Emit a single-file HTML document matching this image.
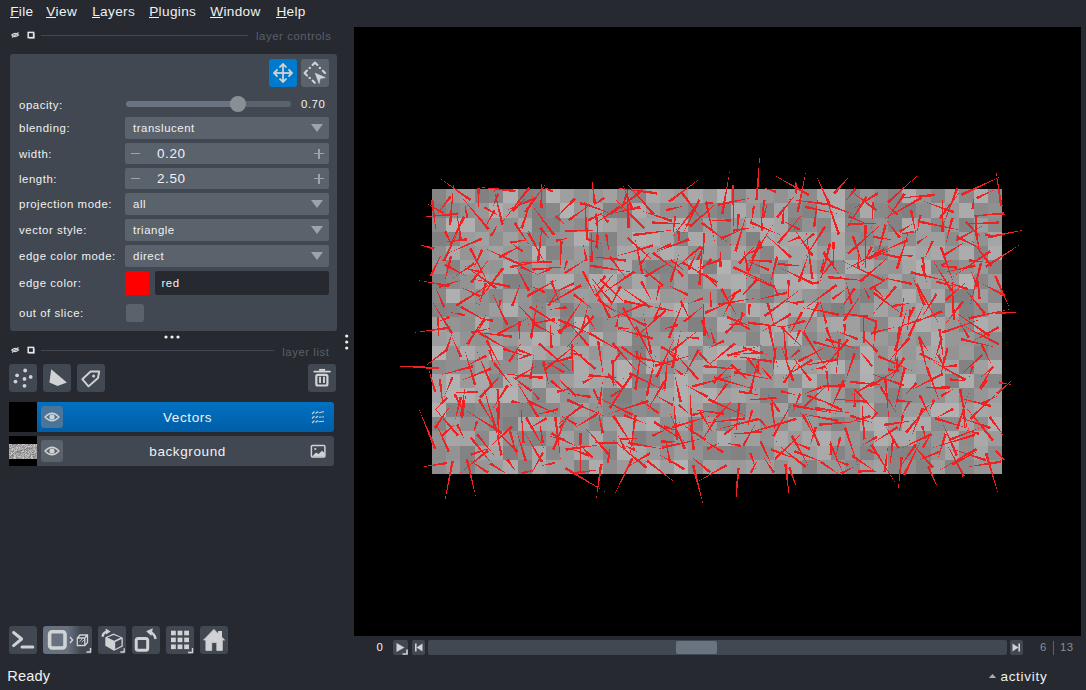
<!DOCTYPE html>
<html><head><meta charset="utf-8">
<style>
*{margin:0;padding:0;box-sizing:border-box}
html,body{width:1086px;height:690px;overflow:hidden;background:#262930}
body{position:relative;font-family:"Liberation Sans",sans-serif;color:#f0f1f2}
.a{position:absolute}
.t{position:absolute;white-space:nowrap;line-height:1}
.lbl{font-size:11.4px;letter-spacing:0.55px}
.menu{font-size:13.6px;letter-spacing:0.35px;top:4.5px}
.menu u{text-decoration:none;position:relative}
.menu u:after{content:"";position:absolute;left:0;right:0;height:1px;background:#f0f1f2;top:13px}
.btn{position:absolute;border-radius:3px}
.combo{position:absolute;left:125px;width:204px;height:22px;background:#5a626c;border-radius:2px}
.tri{position:absolute;right:6.5px;top:7px;width:0;height:0;border-left:6.8px solid transparent;border-right:6.8px solid transparent;border-top:8.2px solid #9da3a8}
.ctext{font-size:11.4px;letter-spacing:0.55px;left:8px}
</style></head><body>
<!-- menu -->
<div class="t menu" style="left:10.2px"><u>F</u>ile</div>
<div class="t menu" style="left:46.2px"><u>V</u>iew</div>
<div class="t menu" style="left:92.2px"><u>L</u>ayers</div>
<div class="t menu" style="left:149.2px"><u>P</u>lugins</div>
<div class="t menu" style="left:210.2px"><u>W</u>indow</div>
<div class="t menu" style="left:276.4px"><u>H</u>elp</div>

<!-- layer controls title -->
<svg class="a" style="left:10px;top:30px" width="26" height="10" viewBox="0 0 26 10">
 <g fill="none" stroke="#d1d2d4" stroke-width="1.2"><path d="M1.8 5 Q5 2 8.5 5 Q5 8 1.8 5Z"/><path d="M2 7.5 L8.5 2.5"/></g>
 <rect x="19.2" y="3.3" width="5.6" height="5.4" fill="#9a9ea3"/><rect x="18.2" y="2.4" width="5.4" height="5.2" fill="#262930" stroke="#e6e7e8" stroke-width="1.5"/>
</svg>
<div class="a" style="left:41px;top:35px;width:207px;height:1px;background:#414851"></div>
<div class="t" style="left:256px;top:30.7px;font-size:11.4px;letter-spacing:0.55px;color:#59606a">layer controls</div>

<!-- panel -->
<div class="a" style="left:10px;top:54px;width:327px;height:277px;background:#414851;border-radius:3px"></div>
<div class="btn" style="left:269px;top:59px;width:28px;height:28px;background:#007acc"></div>
<svg class="a" style="left:269px;top:59px" width="28" height="28" viewBox="0 0 28 28"><g fill="#d1d2d4"><rect x="13.1" y="6" width="1.8" height="16"/><rect x="6" y="13.1" width="16" height="1.8"/><path d="M14 3.8 L18.2 7.9 L16.9 9.1 L14 6.6 L11.1 9.1 L9.8 7.9Z"/><path d="M14 24.2 L18.2 20.1 L16.9 18.9 L14 21.4 L11.1 18.9 L9.8 20.1Z"/><path d="M3.8 14 L7.9 18.2 L9.1 16.9 L6.6 14 L9.1 11.1 L7.9 9.8Z"/><path d="M24.2 14 L20.1 18.2 L18.9 16.9 L21.4 14 L18.9 11.1 L20.1 9.8Z"/></g></svg>
<div class="btn" style="left:301px;top:59px;width:28px;height:28px;background:#5a626c"></div>
<svg class="a" style="left:301px;top:59px" width="28" height="28" viewBox="0 0 28 28"><g fill="none" stroke="#d1d2d4" stroke-width="2.1" stroke-linecap="round" stroke-linejoin="round"><path d="M11.6 6 L14 3.5 L16.4 6"/><path d="M6 11.6 L3.6 14 L6 16.4"/><path d="M21.8 11.8 L24 14"/><path d="M11.6 21.6 L13.8 23.8"/></g><g fill="#d1d2d4"><circle cx="8.8" cy="8.9" r="1.2"/><circle cx="18.9" cy="8.9" r="1.2"/><circle cx="8.7" cy="18.9" r="1.2"/></g><path d="M14.2 14.2 L24.4 18.6 L19.2 19.6 L18.1 24.6 Z" fill="#d1d2d4" stroke="#d1d2d4" stroke-width="0.6" stroke-linejoin="round"/></svg>

<!-- rows -->
<div class="t lbl" style="left:19px;top:99.7px">opacity:</div>
<div class="a" style="left:126px;top:101px;width:165px;height:6px;background:linear-gradient(90deg,#6a7380 0,#6a7380 112px,#5a626c 112px);border-radius:3px"></div>
<div class="a" style="left:230px;top:95.9px;width:15.8px;height:15.8px;background:#899095;border-radius:50%"></div>
<div class="t lbl" style="left:301px;top:98.5px">0.70</div>

<div class="t lbl" style="left:19px;top:123.4px">blending:</div>
<div class="combo" style="top:117px"><div class="t ctext" style="top:5.8px">translucent</div><div class="tri"></div></div>

<div class="t lbl" style="left:19px;top:148.7px">width:</div>
<div class="combo" style="top:143px;height:21px"><div class="a" style="left:6px;top:10px;width:9px;height:1.4px;background:#9da3a8"></div><div class="t" style="left:32px;top:3.5px;font-size:13.5px;letter-spacing:0.6px">0.20</div><div class="a" style="left:189px;top:10px;width:10px;height:1.4px;background:#9da3a8"></div><div class="a" style="left:193.3px;top:5.5px;width:1.4px;height:10px;background:#9da3a8"></div></div>

<div class="t lbl" style="left:19px;top:174.4px">length:</div>
<div class="combo" style="top:168px;height:21px"><div class="a" style="left:6px;top:10px;width:9px;height:1.4px;background:#9da3a8"></div><div class="t" style="left:32px;top:3.5px;font-size:13.5px;letter-spacing:0.6px">2.50</div><div class="a" style="left:189px;top:10px;width:10px;height:1.4px;background:#9da3a8"></div><div class="a" style="left:193.3px;top:5.5px;width:1.4px;height:10px;background:#9da3a8"></div></div>

<div class="t lbl" style="left:19px;top:199px">projection mode:</div>
<div class="combo" style="top:193px"><div class="t ctext" style="top:5.8px">all</div><div class="tri"></div></div>

<div class="t lbl" style="left:19px;top:225px">vector style:</div>
<div class="combo" style="top:219px"><div class="t ctext" style="top:5.8px">triangle</div><div class="tri"></div></div>

<div class="t lbl" style="left:19px;top:250.6px">edge color mode:</div>
<div class="combo" style="top:245px"><div class="t ctext" style="top:5.8px">direct</div><div class="tri"></div></div>

<div class="t lbl" style="left:19px;top:277.6px">edge color:</div>
<div class="a" style="left:125px;top:271px;width:24px;height:24px;background:#ff0000"></div>
<div class="a" style="left:155px;top:271px;width:174px;height:24px;background:#262930;border-radius:2px"></div>
<div class="t lbl" style="left:161.5px;top:277.6px">red</div>

<div class="t lbl" style="left:19px;top:308px">out of slice:</div>
<div class="a" style="left:126px;top:304px;width:18px;height:18px;background:#5a626c;border-radius:3px"></div>

<!-- handle dots -->
<svg class="a" style="left:160px;top:332px" width="24" height="10"><g fill="#f0f1f2"><circle cx="6" cy="5" r="1.6"/><circle cx="12" cy="5" r="1.6"/><circle cx="18" cy="5" r="1.6"/></g></svg>
<svg class="a" style="left:340px;top:330px" width="14" height="24"><g fill="#f0f1f2"><circle cx="6.7" cy="6" r="1.6"/><circle cx="6.7" cy="12" r="1.6"/><circle cx="6.7" cy="18" r="1.6"/></g></svg>

<!-- layer list title -->
<svg class="a" style="left:10px;top:345px" width="26" height="10" viewBox="0 0 26 10">
 <g fill="none" stroke="#d1d2d4" stroke-width="1.2"><path d="M1.8 5 Q5 2 8.5 5 Q5 8 1.8 5Z"/><path d="M2 7.5 L8.5 2.5"/></g>
 <rect x="19.2" y="3.3" width="5.6" height="5.4" fill="#9a9ea3"/><rect x="18.2" y="2.4" width="5.4" height="5.2" fill="#262930" stroke="#e6e7e8" stroke-width="1.5"/>
</svg>
<div class="a" style="left:41px;top:350px;width:233px;height:1px;background:#414851"></div>
<div class="t" style="left:282.2px;top:346.5px;font-size:11.4px;letter-spacing:0.55px;color:#59606a">layer list</div>

<!-- layer buttons -->
<div class="btn" style="left:9px;top:364px;width:28px;height:28px;background:#414851"></div>
<svg class="a" style="left:9px;top:364px" width="28" height="28" viewBox="0 0 28 28"><g fill="#d1d2d4"><circle cx="16.2" cy="6.5" r="1.9"/><circle cx="8.1" cy="11.3" r="1.9"/><circle cx="21.7" cy="12.9" r="1.9"/><circle cx="15.5" cy="14.9" r="1.9"/><circle cx="6.5" cy="17.6" r="1.9"/><circle cx="15.5" cy="21.8" r="1.9"/></g></svg>
<div class="btn" style="left:43px;top:364px;width:28px;height:28px;background:#414851"></div>
<svg class="a" style="left:43px;top:364px" width="28" height="28" viewBox="0 0 28 28"><path d="M8.2 5.2 L23.9 18.5 L14.5 22.1 L6.4 18.5 Z" fill="#d1d2d4"/></svg>
<div class="btn" style="left:77px;top:364px;width:28px;height:28px;background:#414851"></div>
<svg class="a" style="left:77px;top:364px" width="28" height="28" viewBox="0 0 28 28"><path d="M5.3 15.2 L13.6 7.5 H22.2 L21 14 L11.5 22.4 Z" fill="none" stroke="#d1d2d4" stroke-width="1.9" stroke-linejoin="round"/><circle cx="16.6" cy="11.9" r="1.5" fill="#d1d2d4"/></svg>
<div class="btn" style="left:308px;top:364px;width:28px;height:28px;background:#414851"></div>
<svg class="a" style="left:308px;top:364px" width="28" height="28" viewBox="0 0 28 28"><g fill="#d1d2d4"><rect x="5.4" y="6.7" width="17.5" height="1.9" rx="0.8"/><rect x="11.1" y="4.9" width="6" height="2"/><rect x="11.1" y="12.7" width="1.9" height="6.3"/><rect x="15" y="12.7" width="1.9" height="6.3"/></g><rect x="8.3" y="10.9" width="11.1" height="10.6" rx="1.5" fill="none" stroke="#d1d2d4" stroke-width="2.2"/></svg>

<!-- layer rows -->
<div class="a" style="left:9px;top:402px;width:28px;height:30px;background:#000"></div>
<div class="a" style="left:37px;top:402px;width:297px;height:30px;background:linear-gradient(#0071c2,#005ea6);border-radius:0 3px 3px 0"></div>
<div class="btn" style="left:41px;top:406px;width:22px;height:22px;background:#4a7498"></div>
<svg class="a" style="left:41px;top:406px" width="22" height="22" viewBox="0 0 22 22"><path d="M4 11 Q11 3.5 18 11 Q11 18.5 4 11Z" fill="none" stroke="#d1d2d4" stroke-width="1.3"/><circle cx="11" cy="11" r="2.6" fill="#d1d2d4"/></svg>
<div class="t" style="left:163px;top:411px;font-size:13.5px;letter-spacing:0.6px">Vectors</div>
<svg class="a" style="left:308px;top:407px" width="20" height="20" viewBox="0 0 20 20"><g fill="none" stroke="#d1d2d4" stroke-width="1.1"><path d="M4 7 L6.5 4.5 M7.5 6.5 L10 4.5 M10.5 5.8 L12.5 5.5 L14 5 L16 4.8 M4 11.5 L6.5 9 M7.5 11 L10 9 M11 10.2 L13 10 M13.5 10 L16 10 M4 16 L6.5 13.5 M7.5 15.5 L10 13.5 M10.5 14.8 L13 14.5 L16 14.3"/></g></svg>

<div class="a" style="left:9px;top:436px;width:28px;height:30px;background:#000"></div>
<svg class="a" style="left:9px;top:444px" width="28" height="15" shape-rendering="crispEdges"><rect x="0" y="0" width="1" height="1" fill="#bdbdbd"/><rect x="1" y="0" width="1" height="1" fill="#bdbdbd"/><rect x="2" y="0" width="1" height="1" fill="#a6a6a6"/><rect x="3" y="0" width="1" height="1" fill="#939393"/><rect x="4" y="0" width="1" height="1" fill="#818181"/><rect x="5" y="0" width="1" height="1" fill="#9b9b9b"/><rect x="6" y="0" width="1" height="1" fill="#9d9d9d"/><rect x="7" y="0" width="1" height="1" fill="#808080"/><rect x="8" y="0" width="1" height="1" fill="#808080"/><rect x="9" y="0" width="1" height="1" fill="#cccccc"/><rect x="10" y="0" width="1" height="1" fill="#b1b1b1"/><rect x="11" y="0" width="1" height="1" fill="#8f8f8f"/><rect x="12" y="0" width="1" height="1" fill="#9f9f9f"/><rect x="13" y="0" width="1" height="1" fill="#cacaca"/><rect x="14" y="0" width="1" height="1" fill="#c4c4c4"/><rect x="15" y="0" width="1" height="1" fill="#c0c0c0"/><rect x="16" y="0" width="1" height="1" fill="#9c9c9c"/><rect x="17" y="0" width="1" height="1" fill="#a4a4a4"/><rect x="18" y="0" width="1" height="1" fill="#b3b3b3"/><rect x="19" y="0" width="1" height="1" fill="#818181"/><rect x="20" y="0" width="1" height="1" fill="#a9a9a9"/><rect x="21" y="0" width="1" height="1" fill="#929292"/><rect x="22" y="0" width="1" height="1" fill="#c3c3c3"/><rect x="23" y="0" width="1" height="1" fill="#828282"/><rect x="24" y="0" width="1" height="1" fill="#b3b3b3"/><rect x="25" y="0" width="1" height="1" fill="#c2c2c2"/><rect x="26" y="0" width="1" height="1" fill="#8f8f8f"/><rect x="27" y="0" width="1" height="1" fill="#c4c4c4"/><rect x="0" y="1" width="1" height="1" fill="#c2c2c2"/><rect x="1" y="1" width="1" height="1" fill="#7e7e7e"/><rect x="2" y="1" width="1" height="1" fill="#b5b5b5"/><rect x="3" y="1" width="1" height="1" fill="#7d7d7d"/><rect x="4" y="1" width="1" height="1" fill="#a5a5a5"/><rect x="5" y="1" width="1" height="1" fill="#9f9f9f"/><rect x="6" y="1" width="1" height="1" fill="#8d8d8d"/><rect x="7" y="1" width="1" height="1" fill="#969696"/><rect x="8" y="1" width="1" height="1" fill="#bdbdbd"/><rect x="9" y="1" width="1" height="1" fill="#969696"/><rect x="10" y="1" width="1" height="1" fill="#888888"/><rect x="11" y="1" width="1" height="1" fill="#b4b4b4"/><rect x="12" y="1" width="1" height="1" fill="#a0a0a0"/><rect x="13" y="1" width="1" height="1" fill="#bcbcbc"/><rect x="14" y="1" width="1" height="1" fill="#8f8f8f"/><rect x="15" y="1" width="1" height="1" fill="#969696"/><rect x="16" y="1" width="1" height="1" fill="#bcbcbc"/><rect x="17" y="1" width="1" height="1" fill="#a5a5a5"/><rect x="18" y="1" width="1" height="1" fill="#a5a5a5"/><rect x="19" y="1" width="1" height="1" fill="#8f8f8f"/><rect x="20" y="1" width="1" height="1" fill="#7e7e7e"/><rect x="21" y="1" width="1" height="1" fill="#c7c7c7"/><rect x="22" y="1" width="1" height="1" fill="#838383"/><rect x="23" y="1" width="1" height="1" fill="#c0c0c0"/><rect x="24" y="1" width="1" height="1" fill="#9a9a9a"/><rect x="25" y="1" width="1" height="1" fill="#c9c9c9"/><rect x="26" y="1" width="1" height="1" fill="#9c9c9c"/><rect x="27" y="1" width="1" height="1" fill="#c7c7c7"/><rect x="0" y="2" width="1" height="1" fill="#a9a9a9"/><rect x="1" y="2" width="1" height="1" fill="#909090"/><rect x="2" y="2" width="1" height="1" fill="#b8b8b8"/><rect x="3" y="2" width="1" height="1" fill="#b2b2b2"/><rect x="4" y="2" width="1" height="1" fill="#b3b3b3"/><rect x="5" y="2" width="1" height="1" fill="#a2a2a2"/><rect x="6" y="2" width="1" height="1" fill="#8e8e8e"/><rect x="7" y="2" width="1" height="1" fill="#b0b0b0"/><rect x="8" y="2" width="1" height="1" fill="#858585"/><rect x="9" y="2" width="1" height="1" fill="#b4b4b4"/><rect x="10" y="2" width="1" height="1" fill="#afafaf"/><rect x="11" y="2" width="1" height="1" fill="#9b9b9b"/><rect x="12" y="2" width="1" height="1" fill="#bcbcbc"/><rect x="13" y="2" width="1" height="1" fill="#8c8c8c"/><rect x="14" y="2" width="1" height="1" fill="#9c9c9c"/><rect x="15" y="2" width="1" height="1" fill="#bcbcbc"/><rect x="16" y="2" width="1" height="1" fill="#9b9b9b"/><rect x="17" y="2" width="1" height="1" fill="#b6b6b6"/><rect x="18" y="2" width="1" height="1" fill="#aeaeae"/><rect x="19" y="2" width="1" height="1" fill="#c8c8c8"/><rect x="20" y="2" width="1" height="1" fill="#cccccc"/><rect x="21" y="2" width="1" height="1" fill="#b6b6b6"/><rect x="22" y="2" width="1" height="1" fill="#bdbdbd"/><rect x="23" y="2" width="1" height="1" fill="#898989"/><rect x="24" y="2" width="1" height="1" fill="#b6b6b6"/><rect x="25" y="2" width="1" height="1" fill="#c0c0c0"/><rect x="26" y="2" width="1" height="1" fill="#9d9d9d"/><rect x="27" y="2" width="1" height="1" fill="#a9a9a9"/><rect x="0" y="3" width="1" height="1" fill="#a3a3a3"/><rect x="1" y="3" width="1" height="1" fill="#c9c9c9"/><rect x="2" y="3" width="1" height="1" fill="#969696"/><rect x="3" y="3" width="1" height="1" fill="#9d9d9d"/><rect x="4" y="3" width="1" height="1" fill="#7d7d7d"/><rect x="5" y="3" width="1" height="1" fill="#9e9e9e"/><rect x="6" y="3" width="1" height="1" fill="#afafaf"/><rect x="7" y="3" width="1" height="1" fill="#c7c7c7"/><rect x="8" y="3" width="1" height="1" fill="#c6c6c6"/><rect x="9" y="3" width="1" height="1" fill="#979797"/><rect x="10" y="3" width="1" height="1" fill="#cccccc"/><rect x="11" y="3" width="1" height="1" fill="#8c8c8c"/><rect x="12" y="3" width="1" height="1" fill="#bebebe"/><rect x="13" y="3" width="1" height="1" fill="#898989"/><rect x="14" y="3" width="1" height="1" fill="#9d9d9d"/><rect x="15" y="3" width="1" height="1" fill="#828282"/><rect x="16" y="3" width="1" height="1" fill="#c1c1c1"/><rect x="17" y="3" width="1" height="1" fill="#bfbfbf"/><rect x="18" y="3" width="1" height="1" fill="#888888"/><rect x="19" y="3" width="1" height="1" fill="#a7a7a7"/><rect x="20" y="3" width="1" height="1" fill="#919191"/><rect x="21" y="3" width="1" height="1" fill="#a4a4a4"/><rect x="22" y="3" width="1" height="1" fill="#a9a9a9"/><rect x="23" y="3" width="1" height="1" fill="#858585"/><rect x="24" y="3" width="1" height="1" fill="#c2c2c2"/><rect x="25" y="3" width="1" height="1" fill="#939393"/><rect x="26" y="3" width="1" height="1" fill="#a0a0a0"/><rect x="27" y="3" width="1" height="1" fill="#818181"/><rect x="0" y="4" width="1" height="1" fill="#7d7d7d"/><rect x="1" y="4" width="1" height="1" fill="#8c8c8c"/><rect x="2" y="4" width="1" height="1" fill="#989898"/><rect x="3" y="4" width="1" height="1" fill="#c7c7c7"/><rect x="4" y="4" width="1" height="1" fill="#c4c4c4"/><rect x="5" y="4" width="1" height="1" fill="#a3a3a3"/><rect x="6" y="4" width="1" height="1" fill="#a1a1a1"/><rect x="7" y="4" width="1" height="1" fill="#b2b2b2"/><rect x="8" y="4" width="1" height="1" fill="#c1c1c1"/><rect x="9" y="4" width="1" height="1" fill="#979797"/><rect x="10" y="4" width="1" height="1" fill="#bcbcbc"/><rect x="11" y="4" width="1" height="1" fill="#9c9c9c"/><rect x="12" y="4" width="1" height="1" fill="#acacac"/><rect x="13" y="4" width="1" height="1" fill="#b7b7b7"/><rect x="14" y="4" width="1" height="1" fill="#a5a5a5"/><rect x="15" y="4" width="1" height="1" fill="#b4b4b4"/><rect x="16" y="4" width="1" height="1" fill="#b4b4b4"/><rect x="17" y="4" width="1" height="1" fill="#7d7d7d"/><rect x="18" y="4" width="1" height="1" fill="#808080"/><rect x="19" y="4" width="1" height="1" fill="#888888"/><rect x="20" y="4" width="1" height="1" fill="#8e8e8e"/><rect x="21" y="4" width="1" height="1" fill="#8d8d8d"/><rect x="22" y="4" width="1" height="1" fill="#808080"/><rect x="23" y="4" width="1" height="1" fill="#8e8e8e"/><rect x="24" y="4" width="1" height="1" fill="#adadad"/><rect x="25" y="4" width="1" height="1" fill="#c3c3c3"/><rect x="26" y="4" width="1" height="1" fill="#989898"/><rect x="27" y="4" width="1" height="1" fill="#9a9a9a"/><rect x="0" y="5" width="1" height="1" fill="#9e9e9e"/><rect x="1" y="5" width="1" height="1" fill="#b3b3b3"/><rect x="2" y="5" width="1" height="1" fill="#bbbbbb"/><rect x="3" y="5" width="1" height="1" fill="#c8c8c8"/><rect x="4" y="5" width="1" height="1" fill="#9b9b9b"/><rect x="5" y="5" width="1" height="1" fill="#b5b5b5"/><rect x="6" y="5" width="1" height="1" fill="#989898"/><rect x="7" y="5" width="1" height="1" fill="#bebebe"/><rect x="8" y="5" width="1" height="1" fill="#8f8f8f"/><rect x="9" y="5" width="1" height="1" fill="#c2c2c2"/><rect x="10" y="5" width="1" height="1" fill="#a5a5a5"/><rect x="11" y="5" width="1" height="1" fill="#b7b7b7"/><rect x="12" y="5" width="1" height="1" fill="#a7a7a7"/><rect x="13" y="5" width="1" height="1" fill="#969696"/><rect x="14" y="5" width="1" height="1" fill="#a4a4a4"/><rect x="15" y="5" width="1" height="1" fill="#818181"/><rect x="16" y="5" width="1" height="1" fill="#808080"/><rect x="17" y="5" width="1" height="1" fill="#a7a7a7"/><rect x="18" y="5" width="1" height="1" fill="#a3a3a3"/><rect x="19" y="5" width="1" height="1" fill="#bfbfbf"/><rect x="20" y="5" width="1" height="1" fill="#7e7e7e"/><rect x="21" y="5" width="1" height="1" fill="#a9a9a9"/><rect x="22" y="5" width="1" height="1" fill="#a4a4a4"/><rect x="23" y="5" width="1" height="1" fill="#acacac"/><rect x="24" y="5" width="1" height="1" fill="#b7b7b7"/><rect x="25" y="5" width="1" height="1" fill="#a6a6a6"/><rect x="26" y="5" width="1" height="1" fill="#aaaaaa"/><rect x="27" y="5" width="1" height="1" fill="#a4a4a4"/><rect x="0" y="6" width="1" height="1" fill="#aeaeae"/><rect x="1" y="6" width="1" height="1" fill="#909090"/><rect x="2" y="6" width="1" height="1" fill="#a9a9a9"/><rect x="3" y="6" width="1" height="1" fill="#b2b2b2"/><rect x="4" y="6" width="1" height="1" fill="#8c8c8c"/><rect x="5" y="6" width="1" height="1" fill="#cccccc"/><rect x="6" y="6" width="1" height="1" fill="#b8b8b8"/><rect x="7" y="6" width="1" height="1" fill="#c9c9c9"/><rect x="8" y="6" width="1" height="1" fill="#949494"/><rect x="9" y="6" width="1" height="1" fill="#a0a0a0"/><rect x="10" y="6" width="1" height="1" fill="#919191"/><rect x="11" y="6" width="1" height="1" fill="#808080"/><rect x="12" y="6" width="1" height="1" fill="#7e7e7e"/><rect x="13" y="6" width="1" height="1" fill="#909090"/><rect x="14" y="6" width="1" height="1" fill="#c1c1c1"/><rect x="15" y="6" width="1" height="1" fill="#8a8a8a"/><rect x="16" y="6" width="1" height="1" fill="#b4b4b4"/><rect x="17" y="6" width="1" height="1" fill="#909090"/><rect x="18" y="6" width="1" height="1" fill="#828282"/><rect x="19" y="6" width="1" height="1" fill="#8c8c8c"/><rect x="20" y="6" width="1" height="1" fill="#b3b3b3"/><rect x="21" y="6" width="1" height="1" fill="#a5a5a5"/><rect x="22" y="6" width="1" height="1" fill="#a8a8a8"/><rect x="23" y="6" width="1" height="1" fill="#a1a1a1"/><rect x="24" y="6" width="1" height="1" fill="#929292"/><rect x="25" y="6" width="1" height="1" fill="#a4a4a4"/><rect x="26" y="6" width="1" height="1" fill="#c6c6c6"/><rect x="27" y="6" width="1" height="1" fill="#8d8d8d"/><rect x="0" y="7" width="1" height="1" fill="#b7b7b7"/><rect x="1" y="7" width="1" height="1" fill="#919191"/><rect x="2" y="7" width="1" height="1" fill="#8c8c8c"/><rect x="3" y="7" width="1" height="1" fill="#969696"/><rect x="4" y="7" width="1" height="1" fill="#848484"/><rect x="5" y="7" width="1" height="1" fill="#c7c7c7"/><rect x="6" y="7" width="1" height="1" fill="#9a9a9a"/><rect x="7" y="7" width="1" height="1" fill="#8b8b8b"/><rect x="8" y="7" width="1" height="1" fill="#7d7d7d"/><rect x="9" y="7" width="1" height="1" fill="#818181"/><rect x="10" y="7" width="1" height="1" fill="#8e8e8e"/><rect x="11" y="7" width="1" height="1" fill="#9e9e9e"/><rect x="12" y="7" width="1" height="1" fill="#adadad"/><rect x="13" y="7" width="1" height="1" fill="#cbcbcb"/><rect x="14" y="7" width="1" height="1" fill="#c4c4c4"/><rect x="15" y="7" width="1" height="1" fill="#909090"/><rect x="16" y="7" width="1" height="1" fill="#adadad"/><rect x="17" y="7" width="1" height="1" fill="#c6c6c6"/><rect x="18" y="7" width="1" height="1" fill="#858585"/><rect x="19" y="7" width="1" height="1" fill="#c1c1c1"/><rect x="20" y="7" width="1" height="1" fill="#9c9c9c"/><rect x="21" y="7" width="1" height="1" fill="#bbbbbb"/><rect x="22" y="7" width="1" height="1" fill="#969696"/><rect x="23" y="7" width="1" height="1" fill="#afafaf"/><rect x="24" y="7" width="1" height="1" fill="#a5a5a5"/><rect x="25" y="7" width="1" height="1" fill="#858585"/><rect x="26" y="7" width="1" height="1" fill="#b9b9b9"/><rect x="27" y="7" width="1" height="1" fill="#bebebe"/><rect x="0" y="8" width="1" height="1" fill="#a3a3a3"/><rect x="1" y="8" width="1" height="1" fill="#9c9c9c"/><rect x="2" y="8" width="1" height="1" fill="#c8c8c8"/><rect x="3" y="8" width="1" height="1" fill="#9a9a9a"/><rect x="4" y="8" width="1" height="1" fill="#c3c3c3"/><rect x="5" y="8" width="1" height="1" fill="#9e9e9e"/><rect x="6" y="8" width="1" height="1" fill="#9a9a9a"/><rect x="7" y="8" width="1" height="1" fill="#999999"/><rect x="8" y="8" width="1" height="1" fill="#818181"/><rect x="9" y="8" width="1" height="1" fill="#939393"/><rect x="10" y="8" width="1" height="1" fill="#8f8f8f"/><rect x="11" y="8" width="1" height="1" fill="#818181"/><rect x="12" y="8" width="1" height="1" fill="#a8a8a8"/><rect x="13" y="8" width="1" height="1" fill="#a0a0a0"/><rect x="14" y="8" width="1" height="1" fill="#7f7f7f"/><rect x="15" y="8" width="1" height="1" fill="#898989"/><rect x="16" y="8" width="1" height="1" fill="#c6c6c6"/><rect x="17" y="8" width="1" height="1" fill="#878787"/><rect x="18" y="8" width="1" height="1" fill="#9a9a9a"/><rect x="19" y="8" width="1" height="1" fill="#c9c9c9"/><rect x="20" y="8" width="1" height="1" fill="#868686"/><rect x="21" y="8" width="1" height="1" fill="#9d9d9d"/><rect x="22" y="8" width="1" height="1" fill="#bdbdbd"/><rect x="23" y="8" width="1" height="1" fill="#7e7e7e"/><rect x="24" y="8" width="1" height="1" fill="#828282"/><rect x="25" y="8" width="1" height="1" fill="#c7c7c7"/><rect x="26" y="8" width="1" height="1" fill="#b3b3b3"/><rect x="27" y="8" width="1" height="1" fill="#919191"/><rect x="0" y="9" width="1" height="1" fill="#a3a3a3"/><rect x="1" y="9" width="1" height="1" fill="#909090"/><rect x="2" y="9" width="1" height="1" fill="#c4c4c4"/><rect x="3" y="9" width="1" height="1" fill="#c8c8c8"/><rect x="4" y="9" width="1" height="1" fill="#828282"/><rect x="5" y="9" width="1" height="1" fill="#a6a6a6"/><rect x="6" y="9" width="1" height="1" fill="#8b8b8b"/><rect x="7" y="9" width="1" height="1" fill="#9d9d9d"/><rect x="8" y="9" width="1" height="1" fill="#b8b8b8"/><rect x="9" y="9" width="1" height="1" fill="#b6b6b6"/><rect x="10" y="9" width="1" height="1" fill="#8c8c8c"/><rect x="11" y="9" width="1" height="1" fill="#979797"/><rect x="12" y="9" width="1" height="1" fill="#9f9f9f"/><rect x="13" y="9" width="1" height="1" fill="#9b9b9b"/><rect x="14" y="9" width="1" height="1" fill="#b3b3b3"/><rect x="15" y="9" width="1" height="1" fill="#bcbcbc"/><rect x="16" y="9" width="1" height="1" fill="#979797"/><rect x="17" y="9" width="1" height="1" fill="#a0a0a0"/><rect x="18" y="9" width="1" height="1" fill="#828282"/><rect x="19" y="9" width="1" height="1" fill="#9a9a9a"/><rect x="20" y="9" width="1" height="1" fill="#c8c8c8"/><rect x="21" y="9" width="1" height="1" fill="#a5a5a5"/><rect x="22" y="9" width="1" height="1" fill="#a9a9a9"/><rect x="23" y="9" width="1" height="1" fill="#adadad"/><rect x="24" y="9" width="1" height="1" fill="#aaaaaa"/><rect x="25" y="9" width="1" height="1" fill="#bdbdbd"/><rect x="26" y="9" width="1" height="1" fill="#919191"/><rect x="27" y="9" width="1" height="1" fill="#969696"/><rect x="0" y="10" width="1" height="1" fill="#c3c3c3"/><rect x="1" y="10" width="1" height="1" fill="#a4a4a4"/><rect x="2" y="10" width="1" height="1" fill="#c9c9c9"/><rect x="3" y="10" width="1" height="1" fill="#888888"/><rect x="4" y="10" width="1" height="1" fill="#bbbbbb"/><rect x="5" y="10" width="1" height="1" fill="#a2a2a2"/><rect x="6" y="10" width="1" height="1" fill="#a2a2a2"/><rect x="7" y="10" width="1" height="1" fill="#c3c3c3"/><rect x="8" y="10" width="1" height="1" fill="#878787"/><rect x="9" y="10" width="1" height="1" fill="#a6a6a6"/><rect x="10" y="10" width="1" height="1" fill="#909090"/><rect x="11" y="10" width="1" height="1" fill="#989898"/><rect x="12" y="10" width="1" height="1" fill="#bebebe"/><rect x="13" y="10" width="1" height="1" fill="#9c9c9c"/><rect x="14" y="10" width="1" height="1" fill="#bbbbbb"/><rect x="15" y="10" width="1" height="1" fill="#7e7e7e"/><rect x="16" y="10" width="1" height="1" fill="#cccccc"/><rect x="17" y="10" width="1" height="1" fill="#c9c9c9"/><rect x="18" y="10" width="1" height="1" fill="#b3b3b3"/><rect x="19" y="10" width="1" height="1" fill="#8c8c8c"/><rect x="20" y="10" width="1" height="1" fill="#b1b1b1"/><rect x="21" y="10" width="1" height="1" fill="#8c8c8c"/><rect x="22" y="10" width="1" height="1" fill="#9a9a9a"/><rect x="23" y="10" width="1" height="1" fill="#7f7f7f"/><rect x="24" y="10" width="1" height="1" fill="#828282"/><rect x="25" y="10" width="1" height="1" fill="#898989"/><rect x="26" y="10" width="1" height="1" fill="#8b8b8b"/><rect x="27" y="10" width="1" height="1" fill="#c0c0c0"/><rect x="0" y="11" width="1" height="1" fill="#909090"/><rect x="1" y="11" width="1" height="1" fill="#bfbfbf"/><rect x="2" y="11" width="1" height="1" fill="#7d7d7d"/><rect x="3" y="11" width="1" height="1" fill="#818181"/><rect x="4" y="11" width="1" height="1" fill="#818181"/><rect x="5" y="11" width="1" height="1" fill="#c7c7c7"/><rect x="6" y="11" width="1" height="1" fill="#bebebe"/><rect x="7" y="11" width="1" height="1" fill="#7e7e7e"/><rect x="8" y="11" width="1" height="1" fill="#c7c7c7"/><rect x="9" y="11" width="1" height="1" fill="#8f8f8f"/><rect x="10" y="11" width="1" height="1" fill="#929292"/><rect x="11" y="11" width="1" height="1" fill="#ababab"/><rect x="12" y="11" width="1" height="1" fill="#8d8d8d"/><rect x="13" y="11" width="1" height="1" fill="#cacaca"/><rect x="14" y="11" width="1" height="1" fill="#9a9a9a"/><rect x="15" y="11" width="1" height="1" fill="#aaaaaa"/><rect x="16" y="11" width="1" height="1" fill="#aaaaaa"/><rect x="17" y="11" width="1" height="1" fill="#939393"/><rect x="18" y="11" width="1" height="1" fill="#b7b7b7"/><rect x="19" y="11" width="1" height="1" fill="#cccccc"/><rect x="20" y="11" width="1" height="1" fill="#acacac"/><rect x="21" y="11" width="1" height="1" fill="#838383"/><rect x="22" y="11" width="1" height="1" fill="#bdbdbd"/><rect x="23" y="11" width="1" height="1" fill="#b2b2b2"/><rect x="24" y="11" width="1" height="1" fill="#a4a4a4"/><rect x="25" y="11" width="1" height="1" fill="#b1b1b1"/><rect x="26" y="11" width="1" height="1" fill="#919191"/><rect x="27" y="11" width="1" height="1" fill="#959595"/><rect x="0" y="12" width="1" height="1" fill="#a6a6a6"/><rect x="1" y="12" width="1" height="1" fill="#828282"/><rect x="2" y="12" width="1" height="1" fill="#acacac"/><rect x="3" y="12" width="1" height="1" fill="#8b8b8b"/><rect x="4" y="12" width="1" height="1" fill="#919191"/><rect x="5" y="12" width="1" height="1" fill="#c4c4c4"/><rect x="6" y="12" width="1" height="1" fill="#acacac"/><rect x="7" y="12" width="1" height="1" fill="#909090"/><rect x="8" y="12" width="1" height="1" fill="#b4b4b4"/><rect x="9" y="12" width="1" height="1" fill="#cccccc"/><rect x="10" y="12" width="1" height="1" fill="#c4c4c4"/><rect x="11" y="12" width="1" height="1" fill="#bcbcbc"/><rect x="12" y="12" width="1" height="1" fill="#979797"/><rect x="13" y="12" width="1" height="1" fill="#ababab"/><rect x="14" y="12" width="1" height="1" fill="#ababab"/><rect x="15" y="12" width="1" height="1" fill="#848484"/><rect x="16" y="12" width="1" height="1" fill="#b4b4b4"/><rect x="17" y="12" width="1" height="1" fill="#a6a6a6"/><rect x="18" y="12" width="1" height="1" fill="#a6a6a6"/><rect x="19" y="12" width="1" height="1" fill="#b7b7b7"/><rect x="20" y="12" width="1" height="1" fill="#838383"/><rect x="21" y="12" width="1" height="1" fill="#8e8e8e"/><rect x="22" y="12" width="1" height="1" fill="#cccccc"/><rect x="23" y="12" width="1" height="1" fill="#949494"/><rect x="24" y="12" width="1" height="1" fill="#919191"/><rect x="25" y="12" width="1" height="1" fill="#828282"/><rect x="26" y="12" width="1" height="1" fill="#959595"/><rect x="27" y="12" width="1" height="1" fill="#a9a9a9"/><rect x="0" y="13" width="1" height="1" fill="#808080"/><rect x="1" y="13" width="1" height="1" fill="#949494"/><rect x="2" y="13" width="1" height="1" fill="#919191"/><rect x="3" y="13" width="1" height="1" fill="#898989"/><rect x="4" y="13" width="1" height="1" fill="#bcbcbc"/><rect x="5" y="13" width="1" height="1" fill="#c9c9c9"/><rect x="6" y="13" width="1" height="1" fill="#c6c6c6"/><rect x="7" y="13" width="1" height="1" fill="#a0a0a0"/><rect x="8" y="13" width="1" height="1" fill="#828282"/><rect x="9" y="13" width="1" height="1" fill="#989898"/><rect x="10" y="13" width="1" height="1" fill="#a6a6a6"/><rect x="11" y="13" width="1" height="1" fill="#9b9b9b"/><rect x="12" y="13" width="1" height="1" fill="#b7b7b7"/><rect x="13" y="13" width="1" height="1" fill="#b8b8b8"/><rect x="14" y="13" width="1" height="1" fill="#c4c4c4"/><rect x="15" y="13" width="1" height="1" fill="#a2a2a2"/><rect x="16" y="13" width="1" height="1" fill="#909090"/><rect x="17" y="13" width="1" height="1" fill="#c5c5c5"/><rect x="18" y="13" width="1" height="1" fill="#c3c3c3"/><rect x="19" y="13" width="1" height="1" fill="#878787"/><rect x="20" y="13" width="1" height="1" fill="#8d8d8d"/><rect x="21" y="13" width="1" height="1" fill="#b1b1b1"/><rect x="22" y="13" width="1" height="1" fill="#bebebe"/><rect x="23" y="13" width="1" height="1" fill="#c9c9c9"/><rect x="24" y="13" width="1" height="1" fill="#7e7e7e"/><rect x="25" y="13" width="1" height="1" fill="#8c8c8c"/><rect x="26" y="13" width="1" height="1" fill="#9e9e9e"/><rect x="27" y="13" width="1" height="1" fill="#a9a9a9"/><rect x="0" y="14" width="1" height="1" fill="#bbbbbb"/><rect x="1" y="14" width="1" height="1" fill="#a9a9a9"/><rect x="2" y="14" width="1" height="1" fill="#a6a6a6"/><rect x="3" y="14" width="1" height="1" fill="#909090"/><rect x="4" y="14" width="1" height="1" fill="#b1b1b1"/><rect x="5" y="14" width="1" height="1" fill="#ababab"/><rect x="6" y="14" width="1" height="1" fill="#c8c8c8"/><rect x="7" y="14" width="1" height="1" fill="#8c8c8c"/><rect x="8" y="14" width="1" height="1" fill="#868686"/><rect x="9" y="14" width="1" height="1" fill="#999999"/><rect x="10" y="14" width="1" height="1" fill="#979797"/><rect x="11" y="14" width="1" height="1" fill="#a1a1a1"/><rect x="12" y="14" width="1" height="1" fill="#8a8a8a"/><rect x="13" y="14" width="1" height="1" fill="#b5b5b5"/><rect x="14" y="14" width="1" height="1" fill="#bebebe"/><rect x="15" y="14" width="1" height="1" fill="#7d7d7d"/><rect x="16" y="14" width="1" height="1" fill="#c5c5c5"/><rect x="17" y="14" width="1" height="1" fill="#848484"/><rect x="18" y="14" width="1" height="1" fill="#959595"/><rect x="19" y="14" width="1" height="1" fill="#a3a3a3"/><rect x="20" y="14" width="1" height="1" fill="#9e9e9e"/><rect x="21" y="14" width="1" height="1" fill="#8e8e8e"/><rect x="22" y="14" width="1" height="1" fill="#b7b7b7"/><rect x="23" y="14" width="1" height="1" fill="#c0c0c0"/><rect x="24" y="14" width="1" height="1" fill="#8f8f8f"/><rect x="25" y="14" width="1" height="1" fill="#8a8a8a"/><rect x="26" y="14" width="1" height="1" fill="#a6a6a6"/><rect x="27" y="14" width="1" height="1" fill="#888888"/></svg>
<div class="a" style="left:37px;top:436px;width:297px;height:30px;background:#414851;border-radius:0 3px 3px 0"></div>
<div class="btn" style="left:41px;top:440px;width:22px;height:22px;background:#5a626c"></div>
<svg class="a" style="left:41px;top:440px" width="22" height="22" viewBox="0 0 22 22"><path d="M4 11 Q11 3.5 18 11 Q11 18.5 4 11Z" fill="none" stroke="#d1d2d4" stroke-width="1.3"/><circle cx="11" cy="11" r="2.6" fill="#d1d2d4"/></svg>
<div class="t" style="left:149.3px;top:445px;font-size:13.5px;letter-spacing:0.6px">background</div>
<svg class="a" style="left:308px;top:441px" width="20" height="20" viewBox="0 0 20 20"><rect x="3.4" y="4.4" width="13.5" height="11.6" rx="1" fill="none" stroke="#d1d2d4" stroke-width="1.5"/><path d="M4 15.5 L8 11.5 L10.5 13 L14 9.8 L16.5 12 V15.5Z" fill="#d1d2d4"/><circle cx="7.3" cy="8" r="1.1" fill="#d1d2d4"/></svg>

<!-- bottom buttons -->
<div class="btn" style="left:9px;top:626px;width:28px;height:28px;background:#414851"></div>
<svg class="a" style="left:9px;top:626px" width="28" height="28" viewBox="0 0 28 28"><g fill="none" stroke="#d1d2d4" stroke-width="3" stroke-linecap="round" stroke-linejoin="round"><path d="M4.6 6.5 L12.6 13 L4.6 19.6"/><path d="M13 21 H23.8"/></g></svg>
<div class="btn" style="left:43px;top:626px;width:49px;height:28px;background:linear-gradient(90deg,#687180 0%,#687180 50%,#414851 78%)"></div>
<svg class="a" style="left:43px;top:626px" width="49" height="28" viewBox="0 0 49 28"><rect x="6.6" y="5.8" width="15.4" height="16.2" rx="2.5" fill="none" stroke="#d1d2d4" stroke-width="3.6"/><path d="M27 11 L29.6 14 L27 17" fill="none" stroke="#d1d2d4" stroke-width="1.4"/><g fill="none" stroke="#d1d2d4" stroke-width="1.3"><path d="M34.3 12 L37 9 H44.5 V16.5 L41.8 19.5 H34.3 Z M34.3 12 H41.8 V19.5 M41.8 12 L44.5 9"/><path d="M36.5 15.8 L39.5 12.5 M38.6 16.3 L42 13" stroke-width="0.9"/></g><path d="M43.5 26 H47.5 V22" fill="none" stroke="#d1d2d4" stroke-width="1.4"/></svg>
<div class="btn" style="left:98px;top:626px;width:28px;height:28px;background:#414851"></div>
<svg class="a" style="left:98px;top:626px" width="28" height="28" viewBox="0 0 28 28"><path d="M7.3 11.3 L15.7 7.6 L24.8 11.7 L24.8 20.4 L16 24.8 L7.3 19.8Z" fill="#d1d2d4"/><path d="M9.4 11.4 L15.7 8.9 L22.6 11.6 L16.2 14.7Z" fill="#414851"/><path d="M17.2 16 L23.5 13 V19.7 L17.2 23Z" fill="#414851"/><path d="M4.6 10.8 Q4.8 6.8 8.8 5.6" fill="none" stroke="#d1d2d4" stroke-width="2.4"/><path d="M7.6 2.4 L12.6 5.4 L8 8.6Z" fill="#d1d2d4"/><path d="M22.4 26 H26.2 V22.2" fill="none" stroke="#d1d2d4" stroke-width="1.3"/></svg>
<div class="btn" style="left:132px;top:626px;width:28px;height:28px;background:#414851"></div>
<svg class="a" style="left:132px;top:626px" width="28" height="28" viewBox="0 0 28 28"><rect x="4.2" y="12.5" width="11.5" height="11.8" rx="2" fill="none" stroke="#d1d2d4" stroke-width="3"/><path d="M23.6 13 Q22.8 8 18.2 6.2" fill="none" stroke="#d1d2d4" stroke-width="2.4"/><path d="M20.8 2.2 L14.2 5.3 L19.4 10Z" fill="#d1d2d4"/></svg>
<div class="btn" style="left:166px;top:626px;width:28px;height:28px;background:#414851"></div>
<svg class="a" style="left:166px;top:626px" width="28" height="28" viewBox="0 0 28 28"><g fill="#d1d2d4"><rect x="5" y="4.7" width="4.8" height="4.6"/><rect x="11.6" y="4.7" width="4.8" height="4.6"/><rect x="18.2" y="4.7" width="4.8" height="4.6"/><rect x="5" y="11.6" width="4.8" height="4.6"/><rect x="11.6" y="11.6" width="4.8" height="4.6"/><rect x="18.2" y="11.6" width="4.8" height="4.6"/><rect x="5" y="18.5" width="4.8" height="4.6"/><rect x="11.6" y="18.5" width="4.8" height="4.6"/><rect x="18.2" y="18.5" width="4.8" height="4.6"/></g><path d="M22 26.5 H26.5 V22" fill="none" stroke="#d1d2d4" stroke-width="1.4"/></svg>
<div class="btn" style="left:200px;top:626px;width:28px;height:28px;background:#414851"></div>
<svg class="a" style="left:200px;top:626px" width="28" height="28" viewBox="0 0 28 28"><path d="M13.9 3.4 L24.6 14 H22.3 V24.4 H16.8 V16.6 H11.7 V24.4 H5.9 V14 H3.6Z" fill="#d1d2d4" stroke="#d1d2d4" stroke-width="0.8" stroke-linejoin="round"/><rect x="18.1" y="5" width="3.9" height="6" fill="#d1d2d4"/></svg>

<div class="t" style="left:7.3px;top:669px;font-size:14.6px;letter-spacing:0.15px">Ready</div>

<!-- canvas -->
<svg width="727" height="609" viewBox="354 27 727 609" style="position:absolute;left:354px;top:27px">
<rect x="354" y="27" width="727" height="609" fill="#000"/>
<g shape-rendering="crispEdges">
<rect x="432" y="189" width="14" height="14" fill="#868686"/>
<rect x="446" y="189" width="14" height="14" fill="#999999"/>
<rect x="460" y="189" width="15" height="14" fill="#9e9e9e"/>
<rect x="475" y="189" width="14" height="14" fill="#818181"/>
<rect x="489" y="189" width="14" height="14" fill="#878787"/>
<rect x="503" y="189" width="15" height="14" fill="#afafaf"/>
<rect x="518" y="189" width="14" height="14" fill="#838383"/>
<rect x="532" y="189" width="14" height="14" fill="#868686"/>
<rect x="546" y="189" width="14" height="14" fill="#b0b0b0"/>
<rect x="560" y="189" width="14" height="14" fill="#9f9f9f"/>
<rect x="574" y="189" width="15" height="14" fill="#929292"/>
<rect x="589" y="189" width="14" height="14" fill="#9a9a9a"/>
<rect x="603" y="189" width="14" height="14" fill="#a1a1a1"/>
<rect x="617" y="189" width="15" height="14" fill="#8e8e8e"/>
<rect x="632" y="189" width="14" height="14" fill="#878787"/>
<rect x="646" y="189" width="14" height="14" fill="#a8a8a8"/>
<rect x="660" y="189" width="14" height="14" fill="#a2a2a2"/>
<rect x="674" y="189" width="14" height="14" fill="#9a9a9a"/>
<rect x="688" y="189" width="15" height="14" fill="#a9a9a9"/>
<rect x="703" y="189" width="14" height="14" fill="#9c9c9c"/>
<rect x="717" y="189" width="14" height="14" fill="#b2b2b2"/>
<rect x="731" y="189" width="15" height="14" fill="#8a8a8a"/>
<rect x="746" y="189" width="14" height="14" fill="#9c9c9c"/>
<rect x="760" y="189" width="14" height="14" fill="#989898"/>
<rect x="774" y="189" width="14" height="14" fill="#929292"/>
<rect x="788" y="189" width="14" height="14" fill="#9e9e9e"/>
<rect x="802" y="189" width="15" height="14" fill="#8c8c8c"/>
<rect x="817" y="189" width="14" height="14" fill="#a8a8a8"/>
<rect x="831" y="189" width="14" height="14" fill="#acacac"/>
<rect x="845" y="189" width="15" height="14" fill="#868686"/>
<rect x="860" y="189" width="14" height="14" fill="#979797"/>
<rect x="874" y="189" width="14" height="14" fill="#8e8e8e"/>
<rect x="888" y="189" width="14" height="14" fill="#848484"/>
<rect x="902" y="189" width="14" height="14" fill="#adadad"/>
<rect x="916" y="189" width="15" height="14" fill="#959595"/>
<rect x="931" y="189" width="14" height="14" fill="#878787"/>
<rect x="945" y="189" width="14" height="14" fill="#a2a2a2"/>
<rect x="959" y="189" width="15" height="14" fill="#8a8a8a"/>
<rect x="974" y="189" width="14" height="14" fill="#adadad"/>
<rect x="988" y="189" width="14" height="14" fill="#8b8b8b"/>
<rect x="432" y="203" width="14" height="15" fill="#818181"/>
<rect x="446" y="203" width="14" height="15" fill="#8a8a8a"/>
<rect x="460" y="203" width="15" height="15" fill="#919191"/>
<rect x="475" y="203" width="14" height="15" fill="#979797"/>
<rect x="489" y="203" width="14" height="15" fill="#aeaeae"/>
<rect x="503" y="203" width="15" height="15" fill="#a3a3a3"/>
<rect x="518" y="203" width="14" height="15" fill="#919191"/>
<rect x="532" y="203" width="14" height="15" fill="#808080"/>
<rect x="546" y="203" width="14" height="15" fill="#888888"/>
<rect x="560" y="203" width="14" height="15" fill="#b2b2b2"/>
<rect x="574" y="203" width="15" height="15" fill="#979797"/>
<rect x="589" y="203" width="14" height="15" fill="#a3a3a3"/>
<rect x="603" y="203" width="14" height="15" fill="#828282"/>
<rect x="617" y="203" width="15" height="15" fill="#818181"/>
<rect x="632" y="203" width="14" height="15" fill="#ababab"/>
<rect x="646" y="203" width="14" height="15" fill="#9d9d9d"/>
<rect x="660" y="203" width="14" height="15" fill="#8f8f8f"/>
<rect x="674" y="203" width="14" height="15" fill="#909090"/>
<rect x="688" y="203" width="15" height="15" fill="#848484"/>
<rect x="703" y="203" width="14" height="15" fill="#888888"/>
<rect x="717" y="203" width="14" height="15" fill="#818181"/>
<rect x="731" y="203" width="15" height="15" fill="#aaaaaa"/>
<rect x="746" y="203" width="14" height="15" fill="#979797"/>
<rect x="760" y="203" width="14" height="15" fill="#868686"/>
<rect x="774" y="203" width="14" height="15" fill="#a5a5a5"/>
<rect x="788" y="203" width="14" height="15" fill="#898989"/>
<rect x="802" y="203" width="15" height="15" fill="#838383"/>
<rect x="817" y="203" width="14" height="15" fill="#9e9e9e"/>
<rect x="831" y="203" width="14" height="15" fill="#adadad"/>
<rect x="845" y="203" width="15" height="15" fill="#818181"/>
<rect x="860" y="203" width="14" height="15" fill="#a9a9a9"/>
<rect x="874" y="203" width="14" height="15" fill="#898989"/>
<rect x="888" y="203" width="14" height="15" fill="#848484"/>
<rect x="902" y="203" width="14" height="15" fill="#808080"/>
<rect x="916" y="203" width="15" height="15" fill="#8e8e8e"/>
<rect x="931" y="203" width="14" height="15" fill="#a5a5a5"/>
<rect x="945" y="203" width="14" height="15" fill="#999999"/>
<rect x="959" y="203" width="15" height="15" fill="#ababab"/>
<rect x="974" y="203" width="14" height="15" fill="#8b8b8b"/>
<rect x="988" y="203" width="14" height="15" fill="#909090"/>
<rect x="432" y="218" width="14" height="14" fill="#8d8d8d"/>
<rect x="446" y="218" width="14" height="14" fill="#b1b1b1"/>
<rect x="460" y="218" width="15" height="14" fill="#afafaf"/>
<rect x="475" y="218" width="14" height="14" fill="#919191"/>
<rect x="489" y="218" width="14" height="14" fill="#969696"/>
<rect x="503" y="218" width="15" height="14" fill="#909090"/>
<rect x="518" y="218" width="14" height="14" fill="#a6a6a6"/>
<rect x="532" y="218" width="14" height="14" fill="#828282"/>
<rect x="546" y="218" width="14" height="14" fill="#838383"/>
<rect x="560" y="218" width="14" height="14" fill="#949494"/>
<rect x="574" y="218" width="15" height="14" fill="#8c8c8c"/>
<rect x="589" y="218" width="14" height="14" fill="#ababab"/>
<rect x="603" y="218" width="14" height="14" fill="#a5a5a5"/>
<rect x="617" y="218" width="15" height="14" fill="#9b9b9b"/>
<rect x="632" y="218" width="14" height="14" fill="#a1a1a1"/>
<rect x="646" y="218" width="14" height="14" fill="#a3a3a3"/>
<rect x="660" y="218" width="14" height="14" fill="#a7a7a7"/>
<rect x="674" y="218" width="14" height="14" fill="#afafaf"/>
<rect x="688" y="218" width="15" height="14" fill="#878787"/>
<rect x="703" y="218" width="14" height="14" fill="#9f9f9f"/>
<rect x="717" y="218" width="14" height="14" fill="#878787"/>
<rect x="731" y="218" width="15" height="14" fill="#969696"/>
<rect x="746" y="218" width="14" height="14" fill="#a8a8a8"/>
<rect x="760" y="218" width="14" height="14" fill="#adadad"/>
<rect x="774" y="218" width="14" height="14" fill="#a6a6a6"/>
<rect x="788" y="218" width="14" height="14" fill="#818181"/>
<rect x="802" y="218" width="15" height="14" fill="#929292"/>
<rect x="817" y="218" width="14" height="14" fill="#888888"/>
<rect x="831" y="218" width="14" height="14" fill="#b2b2b2"/>
<rect x="845" y="218" width="15" height="14" fill="#878787"/>
<rect x="860" y="218" width="14" height="14" fill="#8c8c8c"/>
<rect x="874" y="218" width="14" height="14" fill="#929292"/>
<rect x="888" y="218" width="14" height="14" fill="#838383"/>
<rect x="902" y="218" width="14" height="14" fill="#acacac"/>
<rect x="916" y="218" width="15" height="14" fill="#a0a0a0"/>
<rect x="931" y="218" width="14" height="14" fill="#888888"/>
<rect x="945" y="218" width="14" height="14" fill="#999999"/>
<rect x="959" y="218" width="15" height="14" fill="#848484"/>
<rect x="974" y="218" width="14" height="14" fill="#9f9f9f"/>
<rect x="988" y="218" width="14" height="14" fill="#8b8b8b"/>
<rect x="432" y="232" width="14" height="14" fill="#818181"/>
<rect x="446" y="232" width="14" height="14" fill="#858585"/>
<rect x="460" y="232" width="15" height="14" fill="#9c9c9c"/>
<rect x="475" y="232" width="14" height="14" fill="#a0a0a0"/>
<rect x="489" y="232" width="14" height="14" fill="#909090"/>
<rect x="503" y="232" width="15" height="14" fill="#a0a0a0"/>
<rect x="518" y="232" width="14" height="14" fill="#919191"/>
<rect x="532" y="232" width="14" height="14" fill="#868686"/>
<rect x="546" y="232" width="14" height="14" fill="#909090"/>
<rect x="560" y="232" width="14" height="14" fill="#949494"/>
<rect x="574" y="232" width="15" height="14" fill="#aeaeae"/>
<rect x="589" y="232" width="14" height="14" fill="#858585"/>
<rect x="603" y="232" width="14" height="14" fill="#848484"/>
<rect x="617" y="232" width="15" height="14" fill="#9c9c9c"/>
<rect x="632" y="232" width="14" height="14" fill="#b1b1b1"/>
<rect x="646" y="232" width="14" height="14" fill="#aeaeae"/>
<rect x="660" y="232" width="14" height="14" fill="#a3a3a3"/>
<rect x="674" y="232" width="14" height="14" fill="#838383"/>
<rect x="688" y="232" width="15" height="14" fill="#a9a9a9"/>
<rect x="703" y="232" width="14" height="14" fill="#a2a2a2"/>
<rect x="717" y="232" width="14" height="14" fill="#878787"/>
<rect x="731" y="232" width="15" height="14" fill="#979797"/>
<rect x="746" y="232" width="14" height="14" fill="#828282"/>
<rect x="760" y="232" width="14" height="14" fill="#a8a8a8"/>
<rect x="774" y="232" width="14" height="14" fill="#a4a4a4"/>
<rect x="788" y="232" width="14" height="14" fill="#a9a9a9"/>
<rect x="802" y="232" width="15" height="14" fill="#a6a6a6"/>
<rect x="817" y="232" width="14" height="14" fill="#8d8d8d"/>
<rect x="831" y="232" width="14" height="14" fill="#a8a8a8"/>
<rect x="845" y="232" width="15" height="14" fill="#8c8c8c"/>
<rect x="860" y="232" width="14" height="14" fill="#878787"/>
<rect x="874" y="232" width="14" height="14" fill="#939393"/>
<rect x="888" y="232" width="14" height="14" fill="#999999"/>
<rect x="902" y="232" width="14" height="14" fill="#8e8e8e"/>
<rect x="916" y="232" width="15" height="14" fill="#9e9e9e"/>
<rect x="931" y="232" width="14" height="14" fill="#9e9e9e"/>
<rect x="945" y="232" width="14" height="14" fill="#8c8c8c"/>
<rect x="959" y="232" width="15" height="14" fill="#9f9f9f"/>
<rect x="974" y="232" width="14" height="14" fill="#929292"/>
<rect x="988" y="232" width="14" height="14" fill="#a5a5a5"/>
<rect x="432" y="246" width="14" height="14" fill="#8e8e8e"/>
<rect x="446" y="246" width="14" height="14" fill="#a8a8a8"/>
<rect x="460" y="246" width="15" height="14" fill="#959595"/>
<rect x="475" y="246" width="14" height="14" fill="#9c9c9c"/>
<rect x="489" y="246" width="14" height="14" fill="#a2a2a2"/>
<rect x="503" y="246" width="15" height="14" fill="#9a9a9a"/>
<rect x="518" y="246" width="14" height="14" fill="#8d8d8d"/>
<rect x="532" y="246" width="14" height="14" fill="#b1b1b1"/>
<rect x="546" y="246" width="14" height="14" fill="#848484"/>
<rect x="560" y="246" width="14" height="14" fill="#909090"/>
<rect x="574" y="246" width="15" height="14" fill="#9c9c9c"/>
<rect x="589" y="246" width="14" height="14" fill="#818181"/>
<rect x="603" y="246" width="14" height="14" fill="#878787"/>
<rect x="617" y="246" width="15" height="14" fill="#a8a8a8"/>
<rect x="632" y="246" width="14" height="14" fill="#a7a7a7"/>
<rect x="646" y="246" width="14" height="14" fill="#a0a0a0"/>
<rect x="660" y="246" width="14" height="14" fill="#adadad"/>
<rect x="674" y="246" width="14" height="14" fill="#a6a6a6"/>
<rect x="688" y="246" width="15" height="14" fill="#8f8f8f"/>
<rect x="703" y="246" width="14" height="14" fill="#a0a0a0"/>
<rect x="717" y="246" width="14" height="14" fill="#919191"/>
<rect x="731" y="246" width="15" height="14" fill="#a6a6a6"/>
<rect x="746" y="246" width="14" height="14" fill="#939393"/>
<rect x="760" y="246" width="14" height="14" fill="#878787"/>
<rect x="774" y="246" width="14" height="14" fill="#acacac"/>
<rect x="788" y="246" width="14" height="14" fill="#a3a3a3"/>
<rect x="802" y="246" width="15" height="14" fill="#a5a5a5"/>
<rect x="817" y="246" width="14" height="14" fill="#9c9c9c"/>
<rect x="831" y="246" width="14" height="14" fill="#a7a7a7"/>
<rect x="845" y="246" width="15" height="14" fill="#969696"/>
<rect x="860" y="246" width="14" height="14" fill="#9c9c9c"/>
<rect x="874" y="246" width="14" height="14" fill="#838383"/>
<rect x="888" y="246" width="14" height="14" fill="#9c9c9c"/>
<rect x="902" y="246" width="14" height="14" fill="#a9a9a9"/>
<rect x="916" y="246" width="15" height="14" fill="#a3a3a3"/>
<rect x="931" y="246" width="14" height="14" fill="#a8a8a8"/>
<rect x="945" y="246" width="14" height="14" fill="#999999"/>
<rect x="959" y="246" width="15" height="14" fill="#acacac"/>
<rect x="974" y="246" width="14" height="14" fill="#858585"/>
<rect x="988" y="246" width="14" height="14" fill="#acacac"/>
<rect x="432" y="260" width="14" height="14" fill="#929292"/>
<rect x="446" y="260" width="14" height="14" fill="#848484"/>
<rect x="460" y="260" width="15" height="14" fill="#9f9f9f"/>
<rect x="475" y="260" width="14" height="14" fill="#979797"/>
<rect x="489" y="260" width="14" height="14" fill="#959595"/>
<rect x="503" y="260" width="15" height="14" fill="#ababab"/>
<rect x="518" y="260" width="14" height="14" fill="#878787"/>
<rect x="532" y="260" width="14" height="14" fill="#9f9f9f"/>
<rect x="546" y="260" width="14" height="14" fill="#959595"/>
<rect x="560" y="260" width="14" height="14" fill="#9a9a9a"/>
<rect x="574" y="260" width="15" height="14" fill="#999999"/>
<rect x="589" y="260" width="14" height="14" fill="#868686"/>
<rect x="603" y="260" width="14" height="14" fill="#9a9a9a"/>
<rect x="617" y="260" width="15" height="14" fill="#ababab"/>
<rect x="632" y="260" width="14" height="14" fill="#888888"/>
<rect x="646" y="260" width="14" height="14" fill="#808080"/>
<rect x="660" y="260" width="14" height="14" fill="#838383"/>
<rect x="674" y="260" width="14" height="14" fill="#979797"/>
<rect x="688" y="260" width="15" height="14" fill="#b1b1b1"/>
<rect x="703" y="260" width="14" height="14" fill="#828282"/>
<rect x="717" y="260" width="14" height="14" fill="#b2b2b2"/>
<rect x="731" y="260" width="15" height="14" fill="#9b9b9b"/>
<rect x="746" y="260" width="14" height="14" fill="#868686"/>
<rect x="760" y="260" width="14" height="14" fill="#959595"/>
<rect x="774" y="260" width="14" height="14" fill="#8a8a8a"/>
<rect x="788" y="260" width="14" height="14" fill="#a4a4a4"/>
<rect x="802" y="260" width="15" height="14" fill="#9b9b9b"/>
<rect x="817" y="260" width="14" height="14" fill="#8e8e8e"/>
<rect x="831" y="260" width="14" height="14" fill="#8d8d8d"/>
<rect x="845" y="260" width="15" height="14" fill="#acacac"/>
<rect x="860" y="260" width="14" height="14" fill="#a7a7a7"/>
<rect x="874" y="260" width="14" height="14" fill="#969696"/>
<rect x="888" y="260" width="14" height="14" fill="#949494"/>
<rect x="902" y="260" width="14" height="14" fill="#a5a5a5"/>
<rect x="916" y="260" width="15" height="14" fill="#b1b1b1"/>
<rect x="931" y="260" width="14" height="14" fill="#848484"/>
<rect x="945" y="260" width="14" height="14" fill="#888888"/>
<rect x="959" y="260" width="15" height="14" fill="#929292"/>
<rect x="974" y="260" width="14" height="14" fill="#999999"/>
<rect x="988" y="260" width="14" height="14" fill="#838383"/>
<rect x="432" y="274" width="14" height="15" fill="#828282"/>
<rect x="446" y="274" width="14" height="15" fill="#8b8b8b"/>
<rect x="460" y="274" width="15" height="15" fill="#939393"/>
<rect x="475" y="274" width="14" height="15" fill="#a5a5a5"/>
<rect x="489" y="274" width="14" height="15" fill="#9f9f9f"/>
<rect x="503" y="274" width="15" height="15" fill="#818181"/>
<rect x="518" y="274" width="14" height="15" fill="#828282"/>
<rect x="532" y="274" width="14" height="15" fill="#979797"/>
<rect x="546" y="274" width="14" height="15" fill="#acacac"/>
<rect x="560" y="274" width="14" height="15" fill="#aeaeae"/>
<rect x="574" y="274" width="15" height="15" fill="#929292"/>
<rect x="589" y="274" width="14" height="15" fill="#adadad"/>
<rect x="603" y="274" width="14" height="15" fill="#afafaf"/>
<rect x="617" y="274" width="15" height="15" fill="#949494"/>
<rect x="632" y="274" width="14" height="15" fill="#a6a6a6"/>
<rect x="646" y="274" width="14" height="15" fill="#929292"/>
<rect x="660" y="274" width="14" height="15" fill="#878787"/>
<rect x="674" y="274" width="14" height="15" fill="#9d9d9d"/>
<rect x="688" y="274" width="15" height="15" fill="#848484"/>
<rect x="703" y="274" width="14" height="15" fill="#a1a1a1"/>
<rect x="717" y="274" width="14" height="15" fill="#a9a9a9"/>
<rect x="731" y="274" width="15" height="15" fill="#aeaeae"/>
<rect x="746" y="274" width="14" height="15" fill="#969696"/>
<rect x="760" y="274" width="14" height="15" fill="#858585"/>
<rect x="774" y="274" width="14" height="15" fill="#aeaeae"/>
<rect x="788" y="274" width="14" height="15" fill="#acacac"/>
<rect x="802" y="274" width="15" height="15" fill="#b1b1b1"/>
<rect x="817" y="274" width="14" height="15" fill="#9e9e9e"/>
<rect x="831" y="274" width="14" height="15" fill="#a2a2a2"/>
<rect x="845" y="274" width="15" height="15" fill="#939393"/>
<rect x="860" y="274" width="14" height="15" fill="#898989"/>
<rect x="874" y="274" width="14" height="15" fill="#8e8e8e"/>
<rect x="888" y="274" width="14" height="15" fill="#a4a4a4"/>
<rect x="902" y="274" width="14" height="15" fill="#909090"/>
<rect x="916" y="274" width="15" height="15" fill="#a3a3a3"/>
<rect x="931" y="274" width="14" height="15" fill="#999999"/>
<rect x="945" y="274" width="14" height="15" fill="#969696"/>
<rect x="959" y="274" width="15" height="15" fill="#b1b1b1"/>
<rect x="974" y="274" width="14" height="15" fill="#888888"/>
<rect x="988" y="274" width="14" height="15" fill="#989898"/>
<rect x="432" y="289" width="14" height="14" fill="#888888"/>
<rect x="446" y="289" width="14" height="14" fill="#afafaf"/>
<rect x="460" y="289" width="15" height="14" fill="#989898"/>
<rect x="475" y="289" width="14" height="14" fill="#909090"/>
<rect x="489" y="289" width="14" height="14" fill="#888888"/>
<rect x="503" y="289" width="15" height="14" fill="#9e9e9e"/>
<rect x="518" y="289" width="14" height="14" fill="#949494"/>
<rect x="532" y="289" width="14" height="14" fill="#868686"/>
<rect x="546" y="289" width="14" height="14" fill="#818181"/>
<rect x="560" y="289" width="14" height="14" fill="#939393"/>
<rect x="574" y="289" width="15" height="14" fill="#9d9d9d"/>
<rect x="589" y="289" width="14" height="14" fill="#9a9a9a"/>
<rect x="603" y="289" width="14" height="14" fill="#adadad"/>
<rect x="617" y="289" width="15" height="14" fill="#aeaeae"/>
<rect x="632" y="289" width="14" height="14" fill="#afafaf"/>
<rect x="646" y="289" width="14" height="14" fill="#a8a8a8"/>
<rect x="660" y="289" width="14" height="14" fill="#989898"/>
<rect x="674" y="289" width="14" height="14" fill="#9a9a9a"/>
<rect x="688" y="289" width="15" height="14" fill="#949494"/>
<rect x="703" y="289" width="14" height="14" fill="#949494"/>
<rect x="717" y="289" width="14" height="14" fill="#828282"/>
<rect x="731" y="289" width="15" height="14" fill="#a8a8a8"/>
<rect x="746" y="289" width="14" height="14" fill="#8c8c8c"/>
<rect x="760" y="289" width="14" height="14" fill="#818181"/>
<rect x="774" y="289" width="14" height="14" fill="#979797"/>
<rect x="788" y="289" width="14" height="14" fill="#a4a4a4"/>
<rect x="802" y="289" width="15" height="14" fill="#969696"/>
<rect x="817" y="289" width="14" height="14" fill="#929292"/>
<rect x="831" y="289" width="14" height="14" fill="#a1a1a1"/>
<rect x="845" y="289" width="15" height="14" fill="#888888"/>
<rect x="860" y="289" width="14" height="14" fill="#808080"/>
<rect x="874" y="289" width="14" height="14" fill="#9e9e9e"/>
<rect x="888" y="289" width="14" height="14" fill="#9b9b9b"/>
<rect x="902" y="289" width="14" height="14" fill="#acacac"/>
<rect x="916" y="289" width="15" height="14" fill="#959595"/>
<rect x="931" y="289" width="14" height="14" fill="#a8a8a8"/>
<rect x="945" y="289" width="14" height="14" fill="#808080"/>
<rect x="959" y="289" width="15" height="14" fill="#818181"/>
<rect x="974" y="289" width="14" height="14" fill="#9e9e9e"/>
<rect x="988" y="289" width="14" height="14" fill="#8b8b8b"/>
<rect x="432" y="303" width="14" height="14" fill="#838383"/>
<rect x="446" y="303" width="14" height="14" fill="#868686"/>
<rect x="460" y="303" width="15" height="14" fill="#939393"/>
<rect x="475" y="303" width="14" height="14" fill="#919191"/>
<rect x="489" y="303" width="14" height="14" fill="#9c9c9c"/>
<rect x="503" y="303" width="15" height="14" fill="#adadad"/>
<rect x="518" y="303" width="14" height="14" fill="#929292"/>
<rect x="532" y="303" width="14" height="14" fill="#898989"/>
<rect x="546" y="303" width="14" height="14" fill="#9d9d9d"/>
<rect x="560" y="303" width="14" height="14" fill="#808080"/>
<rect x="574" y="303" width="15" height="14" fill="#939393"/>
<rect x="589" y="303" width="14" height="14" fill="#909090"/>
<rect x="603" y="303" width="14" height="14" fill="#939393"/>
<rect x="617" y="303" width="15" height="14" fill="#828282"/>
<rect x="632" y="303" width="14" height="14" fill="#9c9c9c"/>
<rect x="646" y="303" width="14" height="14" fill="#9f9f9f"/>
<rect x="660" y="303" width="14" height="14" fill="#a6a6a6"/>
<rect x="674" y="303" width="14" height="14" fill="#b0b0b0"/>
<rect x="688" y="303" width="15" height="14" fill="#929292"/>
<rect x="703" y="303" width="14" height="14" fill="#a1a1a1"/>
<rect x="717" y="303" width="14" height="14" fill="#969696"/>
<rect x="731" y="303" width="15" height="14" fill="#8a8a8a"/>
<rect x="746" y="303" width="14" height="14" fill="#adadad"/>
<rect x="760" y="303" width="14" height="14" fill="#a6a6a6"/>
<rect x="774" y="303" width="14" height="14" fill="#b0b0b0"/>
<rect x="788" y="303" width="14" height="14" fill="#a9a9a9"/>
<rect x="802" y="303" width="15" height="14" fill="#aeaeae"/>
<rect x="817" y="303" width="14" height="14" fill="#868686"/>
<rect x="831" y="303" width="14" height="14" fill="#808080"/>
<rect x="845" y="303" width="15" height="14" fill="#8a8a8a"/>
<rect x="860" y="303" width="14" height="14" fill="#959595"/>
<rect x="874" y="303" width="14" height="14" fill="#a3a3a3"/>
<rect x="888" y="303" width="14" height="14" fill="#969696"/>
<rect x="902" y="303" width="14" height="14" fill="#9a9a9a"/>
<rect x="916" y="303" width="15" height="14" fill="#a6a6a6"/>
<rect x="931" y="303" width="14" height="14" fill="#838383"/>
<rect x="945" y="303" width="14" height="14" fill="#a2a2a2"/>
<rect x="959" y="303" width="15" height="14" fill="#828282"/>
<rect x="974" y="303" width="14" height="14" fill="#8c8c8c"/>
<rect x="988" y="303" width="14" height="14" fill="#a4a4a4"/>
<rect x="432" y="317" width="14" height="15" fill="#a2a2a2"/>
<rect x="446" y="317" width="14" height="15" fill="#949494"/>
<rect x="460" y="317" width="15" height="15" fill="#8f8f8f"/>
<rect x="475" y="317" width="14" height="15" fill="#aaaaaa"/>
<rect x="489" y="317" width="14" height="15" fill="#8e8e8e"/>
<rect x="503" y="317" width="15" height="15" fill="#818181"/>
<rect x="518" y="317" width="14" height="15" fill="#8c8c8c"/>
<rect x="532" y="317" width="14" height="15" fill="#818181"/>
<rect x="546" y="317" width="14" height="15" fill="#a9a9a9"/>
<rect x="560" y="317" width="14" height="15" fill="#868686"/>
<rect x="574" y="317" width="15" height="15" fill="#b1b1b1"/>
<rect x="589" y="317" width="14" height="15" fill="#8a8a8a"/>
<rect x="603" y="317" width="14" height="15" fill="#8f8f8f"/>
<rect x="617" y="317" width="15" height="15" fill="#9d9d9d"/>
<rect x="632" y="317" width="14" height="15" fill="#8f8f8f"/>
<rect x="646" y="317" width="14" height="15" fill="#939393"/>
<rect x="660" y="317" width="14" height="15" fill="#858585"/>
<rect x="674" y="317" width="14" height="15" fill="#939393"/>
<rect x="688" y="317" width="15" height="15" fill="#818181"/>
<rect x="703" y="317" width="14" height="15" fill="#8b8b8b"/>
<rect x="717" y="317" width="14" height="15" fill="#aeaeae"/>
<rect x="731" y="317" width="15" height="15" fill="#8e8e8e"/>
<rect x="746" y="317" width="14" height="15" fill="#8d8d8d"/>
<rect x="760" y="317" width="14" height="15" fill="#a2a2a2"/>
<rect x="774" y="317" width="14" height="15" fill="#adadad"/>
<rect x="788" y="317" width="14" height="15" fill="#8f8f8f"/>
<rect x="802" y="317" width="15" height="15" fill="#939393"/>
<rect x="817" y="317" width="14" height="15" fill="#a4a4a4"/>
<rect x="831" y="317" width="14" height="15" fill="#a8a8a8"/>
<rect x="845" y="317" width="15" height="15" fill="#9f9f9f"/>
<rect x="860" y="317" width="14" height="15" fill="#898989"/>
<rect x="874" y="317" width="14" height="15" fill="#898989"/>
<rect x="888" y="317" width="14" height="15" fill="#a6a6a6"/>
<rect x="902" y="317" width="14" height="15" fill="#a4a4a4"/>
<rect x="916" y="317" width="15" height="15" fill="#adadad"/>
<rect x="931" y="317" width="14" height="15" fill="#a7a7a7"/>
<rect x="945" y="317" width="14" height="15" fill="#959595"/>
<rect x="959" y="317" width="15" height="15" fill="#868686"/>
<rect x="974" y="317" width="14" height="15" fill="#adadad"/>
<rect x="988" y="317" width="14" height="15" fill="#a3a3a3"/>
<rect x="432" y="332" width="14" height="14" fill="#9d9d9d"/>
<rect x="446" y="332" width="14" height="14" fill="#a2a2a2"/>
<rect x="460" y="332" width="15" height="14" fill="#939393"/>
<rect x="475" y="332" width="14" height="14" fill="#919191"/>
<rect x="489" y="332" width="14" height="14" fill="#9d9d9d"/>
<rect x="503" y="332" width="15" height="14" fill="#989898"/>
<rect x="518" y="332" width="14" height="14" fill="#a4a4a4"/>
<rect x="532" y="332" width="14" height="14" fill="#afafaf"/>
<rect x="546" y="332" width="14" height="14" fill="#ababab"/>
<rect x="560" y="332" width="14" height="14" fill="#939393"/>
<rect x="574" y="332" width="15" height="14" fill="#929292"/>
<rect x="589" y="332" width="14" height="14" fill="#afafaf"/>
<rect x="603" y="332" width="14" height="14" fill="#949494"/>
<rect x="617" y="332" width="15" height="14" fill="#a8a8a8"/>
<rect x="632" y="332" width="14" height="14" fill="#848484"/>
<rect x="646" y="332" width="14" height="14" fill="#979797"/>
<rect x="660" y="332" width="14" height="14" fill="#9a9a9a"/>
<rect x="674" y="332" width="14" height="14" fill="#a9a9a9"/>
<rect x="688" y="332" width="15" height="14" fill="#acacac"/>
<rect x="703" y="332" width="14" height="14" fill="#878787"/>
<rect x="717" y="332" width="14" height="14" fill="#9f9f9f"/>
<rect x="731" y="332" width="15" height="14" fill="#a0a0a0"/>
<rect x="746" y="332" width="14" height="14" fill="#878787"/>
<rect x="760" y="332" width="14" height="14" fill="#aaaaaa"/>
<rect x="774" y="332" width="14" height="14" fill="#9c9c9c"/>
<rect x="788" y="332" width="14" height="14" fill="#b1b1b1"/>
<rect x="802" y="332" width="15" height="14" fill="#898989"/>
<rect x="817" y="332" width="14" height="14" fill="#9a9a9a"/>
<rect x="831" y="332" width="14" height="14" fill="#909090"/>
<rect x="845" y="332" width="15" height="14" fill="#a0a0a0"/>
<rect x="860" y="332" width="14" height="14" fill="#9f9f9f"/>
<rect x="874" y="332" width="14" height="14" fill="#9a9a9a"/>
<rect x="888" y="332" width="14" height="14" fill="#909090"/>
<rect x="902" y="332" width="14" height="14" fill="#999999"/>
<rect x="916" y="332" width="15" height="14" fill="#929292"/>
<rect x="931" y="332" width="14" height="14" fill="#adadad"/>
<rect x="945" y="332" width="14" height="14" fill="#979797"/>
<rect x="959" y="332" width="15" height="14" fill="#989898"/>
<rect x="974" y="332" width="14" height="14" fill="#8d8d8d"/>
<rect x="988" y="332" width="14" height="14" fill="#8c8c8c"/>
<rect x="432" y="346" width="14" height="14" fill="#b0b0b0"/>
<rect x="446" y="346" width="14" height="14" fill="#909090"/>
<rect x="460" y="346" width="15" height="14" fill="#acacac"/>
<rect x="475" y="346" width="14" height="14" fill="#9e9e9e"/>
<rect x="489" y="346" width="14" height="14" fill="#b2b2b2"/>
<rect x="503" y="346" width="15" height="14" fill="#888888"/>
<rect x="518" y="346" width="14" height="14" fill="#b0b0b0"/>
<rect x="532" y="346" width="14" height="14" fill="#a7a7a7"/>
<rect x="546" y="346" width="14" height="14" fill="#9c9c9c"/>
<rect x="560" y="346" width="14" height="14" fill="#a4a4a4"/>
<rect x="574" y="346" width="15" height="14" fill="#a4a4a4"/>
<rect x="589" y="346" width="14" height="14" fill="#969696"/>
<rect x="603" y="346" width="14" height="14" fill="#a0a0a0"/>
<rect x="617" y="346" width="15" height="14" fill="#8b8b8b"/>
<rect x="632" y="346" width="14" height="14" fill="#818181"/>
<rect x="646" y="346" width="14" height="14" fill="#a2a2a2"/>
<rect x="660" y="346" width="14" height="14" fill="#989898"/>
<rect x="674" y="346" width="14" height="14" fill="#aeaeae"/>
<rect x="688" y="346" width="15" height="14" fill="#8d8d8d"/>
<rect x="703" y="346" width="14" height="14" fill="#a9a9a9"/>
<rect x="717" y="346" width="14" height="14" fill="#b2b2b2"/>
<rect x="731" y="346" width="15" height="14" fill="#adadad"/>
<rect x="746" y="346" width="14" height="14" fill="#b1b1b1"/>
<rect x="760" y="346" width="14" height="14" fill="#888888"/>
<rect x="774" y="346" width="14" height="14" fill="#888888"/>
<rect x="788" y="346" width="14" height="14" fill="#8b8b8b"/>
<rect x="802" y="346" width="15" height="14" fill="#929292"/>
<rect x="817" y="346" width="14" height="14" fill="#858585"/>
<rect x="831" y="346" width="14" height="14" fill="#878787"/>
<rect x="845" y="346" width="15" height="14" fill="#808080"/>
<rect x="860" y="346" width="14" height="14" fill="#afafaf"/>
<rect x="874" y="346" width="14" height="14" fill="#929292"/>
<rect x="888" y="346" width="14" height="14" fill="#9f9f9f"/>
<rect x="902" y="346" width="14" height="14" fill="#979797"/>
<rect x="916" y="346" width="15" height="14" fill="#a5a5a5"/>
<rect x="931" y="346" width="14" height="14" fill="#a9a9a9"/>
<rect x="945" y="346" width="14" height="14" fill="#939393"/>
<rect x="959" y="346" width="15" height="14" fill="#9b9b9b"/>
<rect x="974" y="346" width="14" height="14" fill="#848484"/>
<rect x="988" y="346" width="14" height="14" fill="#8e8e8e"/>
<rect x="432" y="360" width="14" height="14" fill="#8b8b8b"/>
<rect x="446" y="360" width="14" height="14" fill="#8f8f8f"/>
<rect x="460" y="360" width="15" height="14" fill="#909090"/>
<rect x="475" y="360" width="14" height="14" fill="#9d9d9d"/>
<rect x="489" y="360" width="14" height="14" fill="#909090"/>
<rect x="503" y="360" width="15" height="14" fill="#909090"/>
<rect x="518" y="360" width="14" height="14" fill="#aaaaaa"/>
<rect x="532" y="360" width="14" height="14" fill="#808080"/>
<rect x="546" y="360" width="14" height="14" fill="#808080"/>
<rect x="560" y="360" width="14" height="14" fill="#828282"/>
<rect x="574" y="360" width="15" height="14" fill="#acacac"/>
<rect x="589" y="360" width="14" height="14" fill="#a0a0a0"/>
<rect x="603" y="360" width="14" height="14" fill="#a5a5a5"/>
<rect x="617" y="360" width="15" height="14" fill="#b0b0b0"/>
<rect x="632" y="360" width="14" height="14" fill="#8b8b8b"/>
<rect x="646" y="360" width="14" height="14" fill="#aeaeae"/>
<rect x="660" y="360" width="14" height="14" fill="#8c8c8c"/>
<rect x="674" y="360" width="14" height="14" fill="#9a9a9a"/>
<rect x="688" y="360" width="15" height="14" fill="#a2a2a2"/>
<rect x="703" y="360" width="14" height="14" fill="#a8a8a8"/>
<rect x="717" y="360" width="14" height="14" fill="#8c8c8c"/>
<rect x="731" y="360" width="15" height="14" fill="#989898"/>
<rect x="746" y="360" width="14" height="14" fill="#828282"/>
<rect x="760" y="360" width="14" height="14" fill="#8e8e8e"/>
<rect x="774" y="360" width="14" height="14" fill="#b2b2b2"/>
<rect x="788" y="360" width="14" height="14" fill="#aeaeae"/>
<rect x="802" y="360" width="15" height="14" fill="#9d9d9d"/>
<rect x="817" y="360" width="14" height="14" fill="#a8a8a8"/>
<rect x="831" y="360" width="14" height="14" fill="#aeaeae"/>
<rect x="845" y="360" width="15" height="14" fill="#909090"/>
<rect x="860" y="360" width="14" height="14" fill="#b2b2b2"/>
<rect x="874" y="360" width="14" height="14" fill="#969696"/>
<rect x="888" y="360" width="14" height="14" fill="#888888"/>
<rect x="902" y="360" width="14" height="14" fill="#9b9b9b"/>
<rect x="916" y="360" width="15" height="14" fill="#9e9e9e"/>
<rect x="931" y="360" width="14" height="14" fill="#a3a3a3"/>
<rect x="945" y="360" width="14" height="14" fill="#a2a2a2"/>
<rect x="959" y="360" width="15" height="14" fill="#828282"/>
<rect x="974" y="360" width="14" height="14" fill="#a0a0a0"/>
<rect x="988" y="360" width="14" height="14" fill="#afafaf"/>
<rect x="432" y="374" width="14" height="14" fill="#a2a2a2"/>
<rect x="446" y="374" width="14" height="14" fill="#b1b1b1"/>
<rect x="460" y="374" width="15" height="14" fill="#9a9a9a"/>
<rect x="475" y="374" width="14" height="14" fill="#a9a9a9"/>
<rect x="489" y="374" width="14" height="14" fill="#878787"/>
<rect x="503" y="374" width="15" height="14" fill="#adadad"/>
<rect x="518" y="374" width="14" height="14" fill="#969696"/>
<rect x="532" y="374" width="14" height="14" fill="#acacac"/>
<rect x="546" y="374" width="14" height="14" fill="#909090"/>
<rect x="560" y="374" width="14" height="14" fill="#9f9f9f"/>
<rect x="574" y="374" width="15" height="14" fill="#ababab"/>
<rect x="589" y="374" width="14" height="14" fill="#a4a4a4"/>
<rect x="603" y="374" width="14" height="14" fill="#9f9f9f"/>
<rect x="617" y="374" width="15" height="14" fill="#b1b1b1"/>
<rect x="632" y="374" width="14" height="14" fill="#848484"/>
<rect x="646" y="374" width="14" height="14" fill="#858585"/>
<rect x="660" y="374" width="14" height="14" fill="#9c9c9c"/>
<rect x="674" y="374" width="14" height="14" fill="#b0b0b0"/>
<rect x="688" y="374" width="15" height="14" fill="#a3a3a3"/>
<rect x="703" y="374" width="14" height="14" fill="#8f8f8f"/>
<rect x="717" y="374" width="14" height="14" fill="#858585"/>
<rect x="731" y="374" width="15" height="14" fill="#969696"/>
<rect x="746" y="374" width="14" height="14" fill="#989898"/>
<rect x="760" y="374" width="14" height="14" fill="#979797"/>
<rect x="774" y="374" width="14" height="14" fill="#9f9f9f"/>
<rect x="788" y="374" width="14" height="14" fill="#8d8d8d"/>
<rect x="802" y="374" width="15" height="14" fill="#acacac"/>
<rect x="817" y="374" width="14" height="14" fill="#8e8e8e"/>
<rect x="831" y="374" width="14" height="14" fill="#858585"/>
<rect x="845" y="374" width="15" height="14" fill="#919191"/>
<rect x="860" y="374" width="14" height="14" fill="#afafaf"/>
<rect x="874" y="374" width="14" height="14" fill="#888888"/>
<rect x="888" y="374" width="14" height="14" fill="#8e8e8e"/>
<rect x="902" y="374" width="14" height="14" fill="#afafaf"/>
<rect x="916" y="374" width="15" height="14" fill="#919191"/>
<rect x="931" y="374" width="14" height="14" fill="#aaaaaa"/>
<rect x="945" y="374" width="14" height="14" fill="#828282"/>
<rect x="959" y="374" width="15" height="14" fill="#adadad"/>
<rect x="974" y="374" width="14" height="14" fill="#8c8c8c"/>
<rect x="988" y="374" width="14" height="14" fill="#898989"/>
<rect x="432" y="388" width="14" height="15" fill="#a5a5a5"/>
<rect x="446" y="388" width="14" height="15" fill="#b2b2b2"/>
<rect x="460" y="388" width="15" height="15" fill="#b0b0b0"/>
<rect x="475" y="388" width="14" height="15" fill="#a6a6a6"/>
<rect x="489" y="388" width="14" height="15" fill="#aeaeae"/>
<rect x="503" y="388" width="15" height="15" fill="#b2b2b2"/>
<rect x="518" y="388" width="14" height="15" fill="#9c9c9c"/>
<rect x="532" y="388" width="14" height="15" fill="#878787"/>
<rect x="546" y="388" width="14" height="15" fill="#ababab"/>
<rect x="560" y="388" width="14" height="15" fill="#949494"/>
<rect x="574" y="388" width="15" height="15" fill="#8f8f8f"/>
<rect x="589" y="388" width="14" height="15" fill="#999999"/>
<rect x="603" y="388" width="14" height="15" fill="#818181"/>
<rect x="617" y="388" width="15" height="15" fill="#808080"/>
<rect x="632" y="388" width="14" height="15" fill="#8d8d8d"/>
<rect x="646" y="388" width="14" height="15" fill="#9e9e9e"/>
<rect x="660" y="388" width="14" height="15" fill="#a6a6a6"/>
<rect x="674" y="388" width="14" height="15" fill="#b0b0b0"/>
<rect x="688" y="388" width="15" height="15" fill="#a9a9a9"/>
<rect x="703" y="388" width="14" height="15" fill="#afafaf"/>
<rect x="717" y="388" width="14" height="15" fill="#a0a0a0"/>
<rect x="731" y="388" width="15" height="15" fill="#a5a5a5"/>
<rect x="746" y="388" width="14" height="15" fill="#9d9d9d"/>
<rect x="760" y="388" width="14" height="15" fill="#848484"/>
<rect x="774" y="388" width="14" height="15" fill="#838383"/>
<rect x="788" y="388" width="14" height="15" fill="#a6a6a6"/>
<rect x="802" y="388" width="15" height="15" fill="#8a8a8a"/>
<rect x="817" y="388" width="14" height="15" fill="#a8a8a8"/>
<rect x="831" y="388" width="14" height="15" fill="#979797"/>
<rect x="845" y="388" width="15" height="15" fill="#808080"/>
<rect x="860" y="388" width="14" height="15" fill="#9c9c9c"/>
<rect x="874" y="388" width="14" height="15" fill="#969696"/>
<rect x="888" y="388" width="14" height="15" fill="#838383"/>
<rect x="902" y="388" width="14" height="15" fill="#8d8d8d"/>
<rect x="916" y="388" width="15" height="15" fill="#8f8f8f"/>
<rect x="931" y="388" width="14" height="15" fill="#919191"/>
<rect x="945" y="388" width="14" height="15" fill="#a4a4a4"/>
<rect x="959" y="388" width="15" height="15" fill="#888888"/>
<rect x="974" y="388" width="14" height="15" fill="#969696"/>
<rect x="988" y="388" width="14" height="15" fill="#9e9e9e"/>
<rect x="432" y="403" width="14" height="14" fill="#b0b0b0"/>
<rect x="446" y="403" width="14" height="14" fill="#858585"/>
<rect x="460" y="403" width="15" height="14" fill="#848484"/>
<rect x="475" y="403" width="14" height="14" fill="#898989"/>
<rect x="489" y="403" width="14" height="14" fill="#8b8b8b"/>
<rect x="503" y="403" width="15" height="14" fill="#888888"/>
<rect x="518" y="403" width="14" height="14" fill="#838383"/>
<rect x="532" y="403" width="14" height="14" fill="#8a8a8a"/>
<rect x="546" y="403" width="14" height="14" fill="#8b8b8b"/>
<rect x="560" y="403" width="14" height="14" fill="#989898"/>
<rect x="574" y="403" width="15" height="14" fill="#a1a1a1"/>
<rect x="589" y="403" width="14" height="14" fill="#929292"/>
<rect x="603" y="403" width="14" height="14" fill="#888888"/>
<rect x="617" y="403" width="15" height="14" fill="#848484"/>
<rect x="632" y="403" width="14" height="14" fill="#8d8d8d"/>
<rect x="646" y="403" width="14" height="14" fill="#888888"/>
<rect x="660" y="403" width="14" height="14" fill="#989898"/>
<rect x="674" y="403" width="14" height="14" fill="#acacac"/>
<rect x="688" y="403" width="15" height="14" fill="#a4a4a4"/>
<rect x="703" y="403" width="14" height="14" fill="#8a8a8a"/>
<rect x="717" y="403" width="14" height="14" fill="#818181"/>
<rect x="731" y="403" width="15" height="14" fill="#838383"/>
<rect x="746" y="403" width="14" height="14" fill="#969696"/>
<rect x="760" y="403" width="14" height="14" fill="#929292"/>
<rect x="774" y="403" width="14" height="14" fill="#a2a2a2"/>
<rect x="788" y="403" width="14" height="14" fill="#848484"/>
<rect x="802" y="403" width="15" height="14" fill="#8c8c8c"/>
<rect x="817" y="403" width="14" height="14" fill="#a2a2a2"/>
<rect x="831" y="403" width="14" height="14" fill="#9c9c9c"/>
<rect x="845" y="403" width="15" height="14" fill="#9a9a9a"/>
<rect x="860" y="403" width="14" height="14" fill="#adadad"/>
<rect x="874" y="403" width="14" height="14" fill="#858585"/>
<rect x="888" y="403" width="14" height="14" fill="#898989"/>
<rect x="902" y="403" width="14" height="14" fill="#9c9c9c"/>
<rect x="916" y="403" width="15" height="14" fill="#9c9c9c"/>
<rect x="931" y="403" width="14" height="14" fill="#b1b1b1"/>
<rect x="945" y="403" width="14" height="14" fill="#b1b1b1"/>
<rect x="959" y="403" width="15" height="14" fill="#9d9d9d"/>
<rect x="974" y="403" width="14" height="14" fill="#a6a6a6"/>
<rect x="988" y="403" width="14" height="14" fill="#a3a3a3"/>
<rect x="432" y="417" width="14" height="14" fill="#868686"/>
<rect x="446" y="417" width="14" height="14" fill="#9e9e9e"/>
<rect x="460" y="417" width="15" height="14" fill="#8f8f8f"/>
<rect x="475" y="417" width="14" height="14" fill="#929292"/>
<rect x="489" y="417" width="14" height="14" fill="#878787"/>
<rect x="503" y="417" width="15" height="14" fill="#808080"/>
<rect x="518" y="417" width="14" height="14" fill="#ababab"/>
<rect x="532" y="417" width="14" height="14" fill="#a4a4a4"/>
<rect x="546" y="417" width="14" height="14" fill="#a6a6a6"/>
<rect x="560" y="417" width="14" height="14" fill="#8e8e8e"/>
<rect x="574" y="417" width="15" height="14" fill="#959595"/>
<rect x="589" y="417" width="14" height="14" fill="#888888"/>
<rect x="603" y="417" width="14" height="14" fill="#9e9e9e"/>
<rect x="617" y="417" width="15" height="14" fill="#aaaaaa"/>
<rect x="632" y="417" width="14" height="14" fill="#a7a7a7"/>
<rect x="646" y="417" width="14" height="14" fill="#afafaf"/>
<rect x="660" y="417" width="14" height="14" fill="#8d8d8d"/>
<rect x="674" y="417" width="14" height="14" fill="#a3a3a3"/>
<rect x="688" y="417" width="15" height="14" fill="#868686"/>
<rect x="703" y="417" width="14" height="14" fill="#9b9b9b"/>
<rect x="717" y="417" width="14" height="14" fill="#858585"/>
<rect x="731" y="417" width="15" height="14" fill="#9b9b9b"/>
<rect x="746" y="417" width="14" height="14" fill="#9b9b9b"/>
<rect x="760" y="417" width="14" height="14" fill="#919191"/>
<rect x="774" y="417" width="14" height="14" fill="#919191"/>
<rect x="788" y="417" width="14" height="14" fill="#a4a4a4"/>
<rect x="802" y="417" width="15" height="14" fill="#989898"/>
<rect x="817" y="417" width="14" height="14" fill="#949494"/>
<rect x="831" y="417" width="14" height="14" fill="#858585"/>
<rect x="845" y="417" width="15" height="14" fill="#8e8e8e"/>
<rect x="860" y="417" width="14" height="14" fill="#ababab"/>
<rect x="874" y="417" width="14" height="14" fill="#b1b1b1"/>
<rect x="888" y="417" width="14" height="14" fill="#939393"/>
<rect x="902" y="417" width="14" height="14" fill="#acacac"/>
<rect x="916" y="417" width="15" height="14" fill="#acacac"/>
<rect x="931" y="417" width="14" height="14" fill="#8b8b8b"/>
<rect x="945" y="417" width="14" height="14" fill="#8d8d8d"/>
<rect x="959" y="417" width="15" height="14" fill="#a3a3a3"/>
<rect x="974" y="417" width="14" height="14" fill="#8f8f8f"/>
<rect x="988" y="417" width="14" height="14" fill="#b0b0b0"/>
<rect x="432" y="431" width="14" height="15" fill="#929292"/>
<rect x="446" y="431" width="14" height="15" fill="#a5a5a5"/>
<rect x="460" y="431" width="15" height="15" fill="#a4a4a4"/>
<rect x="475" y="431" width="14" height="15" fill="#8a8a8a"/>
<rect x="489" y="431" width="14" height="15" fill="#acacac"/>
<rect x="503" y="431" width="15" height="15" fill="#909090"/>
<rect x="518" y="431" width="14" height="15" fill="#858585"/>
<rect x="532" y="431" width="14" height="15" fill="#828282"/>
<rect x="546" y="431" width="14" height="15" fill="#979797"/>
<rect x="560" y="431" width="14" height="15" fill="#a0a0a0"/>
<rect x="574" y="431" width="15" height="15" fill="#8d8d8d"/>
<rect x="589" y="431" width="14" height="15" fill="#aaaaaa"/>
<rect x="603" y="431" width="14" height="15" fill="#8d8d8d"/>
<rect x="617" y="431" width="15" height="15" fill="#ababab"/>
<rect x="632" y="431" width="14" height="15" fill="#818181"/>
<rect x="646" y="431" width="14" height="15" fill="#8d8d8d"/>
<rect x="660" y="431" width="14" height="15" fill="#888888"/>
<rect x="674" y="431" width="14" height="15" fill="#969696"/>
<rect x="688" y="431" width="15" height="15" fill="#919191"/>
<rect x="703" y="431" width="14" height="15" fill="#949494"/>
<rect x="717" y="431" width="14" height="15" fill="#ababab"/>
<rect x="731" y="431" width="15" height="15" fill="#9d9d9d"/>
<rect x="746" y="431" width="14" height="15" fill="#9e9e9e"/>
<rect x="760" y="431" width="14" height="15" fill="#939393"/>
<rect x="774" y="431" width="14" height="15" fill="#a9a9a9"/>
<rect x="788" y="431" width="14" height="15" fill="#999999"/>
<rect x="802" y="431" width="15" height="15" fill="#a6a6a6"/>
<rect x="817" y="431" width="14" height="15" fill="#aeaeae"/>
<rect x="831" y="431" width="14" height="15" fill="#9f9f9f"/>
<rect x="845" y="431" width="15" height="15" fill="#969696"/>
<rect x="860" y="431" width="14" height="15" fill="#8d8d8d"/>
<rect x="874" y="431" width="14" height="15" fill="#aeaeae"/>
<rect x="888" y="431" width="14" height="15" fill="#a7a7a7"/>
<rect x="902" y="431" width="14" height="15" fill="#a8a8a8"/>
<rect x="916" y="431" width="15" height="15" fill="#8b8b8b"/>
<rect x="931" y="431" width="14" height="15" fill="#969696"/>
<rect x="945" y="431" width="14" height="15" fill="#adadad"/>
<rect x="959" y="431" width="15" height="15" fill="#8c8c8c"/>
<rect x="974" y="431" width="14" height="15" fill="#a9a9a9"/>
<rect x="988" y="431" width="14" height="15" fill="#9b9b9b"/>
<rect x="432" y="446" width="14" height="14" fill="#8b8b8b"/>
<rect x="446" y="446" width="14" height="14" fill="#939393"/>
<rect x="460" y="446" width="15" height="14" fill="#838383"/>
<rect x="475" y="446" width="14" height="14" fill="#a2a2a2"/>
<rect x="489" y="446" width="14" height="14" fill="#a5a5a5"/>
<rect x="503" y="446" width="15" height="14" fill="#818181"/>
<rect x="518" y="446" width="14" height="14" fill="#8f8f8f"/>
<rect x="532" y="446" width="14" height="14" fill="#a7a7a7"/>
<rect x="546" y="446" width="14" height="14" fill="#8a8a8a"/>
<rect x="560" y="446" width="14" height="14" fill="#9b9b9b"/>
<rect x="574" y="446" width="15" height="14" fill="#a9a9a9"/>
<rect x="589" y="446" width="14" height="14" fill="#9d9d9d"/>
<rect x="603" y="446" width="14" height="14" fill="#868686"/>
<rect x="617" y="446" width="15" height="14" fill="#aeaeae"/>
<rect x="632" y="446" width="14" height="14" fill="#a6a6a6"/>
<rect x="646" y="446" width="14" height="14" fill="#9c9c9c"/>
<rect x="660" y="446" width="14" height="14" fill="#909090"/>
<rect x="674" y="446" width="14" height="14" fill="#9d9d9d"/>
<rect x="688" y="446" width="15" height="14" fill="#939393"/>
<rect x="703" y="446" width="14" height="14" fill="#868686"/>
<rect x="717" y="446" width="14" height="14" fill="#868686"/>
<rect x="731" y="446" width="15" height="14" fill="#828282"/>
<rect x="746" y="446" width="14" height="14" fill="#888888"/>
<rect x="760" y="446" width="14" height="14" fill="#8c8c8c"/>
<rect x="774" y="446" width="14" height="14" fill="#a0a0a0"/>
<rect x="788" y="446" width="14" height="14" fill="#9d9d9d"/>
<rect x="802" y="446" width="15" height="14" fill="#9e9e9e"/>
<rect x="817" y="446" width="14" height="14" fill="#a9a9a9"/>
<rect x="831" y="446" width="14" height="14" fill="#848484"/>
<rect x="845" y="446" width="15" height="14" fill="#939393"/>
<rect x="860" y="446" width="14" height="14" fill="#848484"/>
<rect x="874" y="446" width="14" height="14" fill="#959595"/>
<rect x="888" y="446" width="14" height="14" fill="#848484"/>
<rect x="902" y="446" width="14" height="14" fill="#838383"/>
<rect x="916" y="446" width="15" height="14" fill="#858585"/>
<rect x="931" y="446" width="14" height="14" fill="#939393"/>
<rect x="945" y="446" width="14" height="14" fill="#a6a6a6"/>
<rect x="959" y="446" width="15" height="14" fill="#8e8e8e"/>
<rect x="974" y="446" width="14" height="14" fill="#a5a5a5"/>
<rect x="988" y="446" width="14" height="14" fill="#8b8b8b"/>
<rect x="432" y="460" width="14" height="14" fill="#8e8e8e"/>
<rect x="446" y="460" width="14" height="14" fill="#989898"/>
<rect x="460" y="460" width="15" height="14" fill="#838383"/>
<rect x="475" y="460" width="14" height="14" fill="#969696"/>
<rect x="489" y="460" width="14" height="14" fill="#9d9d9d"/>
<rect x="503" y="460" width="15" height="14" fill="#aaaaaa"/>
<rect x="518" y="460" width="14" height="14" fill="#828282"/>
<rect x="532" y="460" width="14" height="14" fill="#a8a8a8"/>
<rect x="546" y="460" width="14" height="14" fill="#9d9d9d"/>
<rect x="560" y="460" width="14" height="14" fill="#9d9d9d"/>
<rect x="574" y="460" width="15" height="14" fill="#828282"/>
<rect x="589" y="460" width="14" height="14" fill="#acacac"/>
<rect x="603" y="460" width="14" height="14" fill="#8e8e8e"/>
<rect x="617" y="460" width="15" height="14" fill="#9b9b9b"/>
<rect x="632" y="460" width="14" height="14" fill="#9b9b9b"/>
<rect x="646" y="460" width="14" height="14" fill="#aeaeae"/>
<rect x="660" y="460" width="14" height="14" fill="#9e9e9e"/>
<rect x="674" y="460" width="14" height="14" fill="#b2b2b2"/>
<rect x="688" y="460" width="15" height="14" fill="#8b8b8b"/>
<rect x="703" y="460" width="14" height="14" fill="#a1a1a1"/>
<rect x="717" y="460" width="14" height="14" fill="#9d9d9d"/>
<rect x="731" y="460" width="15" height="14" fill="#9a9a9a"/>
<rect x="746" y="460" width="14" height="14" fill="#a0a0a0"/>
<rect x="760" y="460" width="14" height="14" fill="#9c9c9c"/>
<rect x="774" y="460" width="14" height="14" fill="#919191"/>
<rect x="788" y="460" width="14" height="14" fill="#a0a0a0"/>
<rect x="802" y="460" width="15" height="14" fill="#848484"/>
<rect x="817" y="460" width="14" height="14" fill="#989898"/>
<rect x="831" y="460" width="14" height="14" fill="#979797"/>
<rect x="845" y="460" width="15" height="14" fill="#8a8a8a"/>
<rect x="860" y="460" width="14" height="14" fill="#9c9c9c"/>
<rect x="874" y="460" width="14" height="14" fill="#a2a2a2"/>
<rect x="888" y="460" width="14" height="14" fill="#868686"/>
<rect x="902" y="460" width="14" height="14" fill="#8f8f8f"/>
<rect x="916" y="460" width="15" height="14" fill="#838383"/>
<rect x="931" y="460" width="14" height="14" fill="#9e9e9e"/>
<rect x="945" y="460" width="14" height="14" fill="#848484"/>
<rect x="959" y="460" width="15" height="14" fill="#8b8b8b"/>
<rect x="974" y="460" width="14" height="14" fill="#969696"/>
<rect x="988" y="460" width="14" height="14" fill="#979797"/>
</g>
<path fill="#ee2222" shape-rendering="crispEdges" d="M430.7 200.0L433.4 199.7L436.3 233.5ZM449.8 195.2L451.9 196.9L436.7 214.8ZM471.0 198.8L469.5 201.0L440.3 178.6ZM477.3 188.0L480.0 188.0L478.1 211.8ZM497.0 193.3L499.5 194.3L492.4 208.2ZM515.6 189.7L515.3 192.4L478.8 187.1ZM528.2 187.0L530.3 188.6L500.9 223.9ZM535.7 196.6L536.7 199.1L504.8 211.1ZM553.3 190.1L552.2 192.6L541.4 186.7ZM573.8 197.8L575.7 199.7L552.8 221.1ZM579.5 204.4L580.2 201.8L601.7 209.2ZM596.2 203.3L593.6 203.7L591.5 176.5ZM603.8 196.7L605.3 198.9L591.0 206.8ZM625.7 193.2L628.3 194.1L619.5 214.0ZM641.7 188.8L643.4 190.9L606.5 218.4ZM657.2 192.1L656.8 194.7L612.4 187.4ZM670.0 202.6L668.4 200.4L700.8 178.2ZM680.6 193.1L682.8 191.5L704.3 223.3ZM698.2 199.0L700.6 200.2L680.6 238.9ZM704.5 204.6L704.5 201.9L718.2 202.9ZM718.4 206.0L717.8 203.4L753.5 197.5ZM731.8 184.5L734.5 184.5L733.4 230.5ZM758.0 200.0L755.3 199.8L759.8 155.5ZM763.0 199.6L765.7 199.9L761.4 223.4ZM776.3 190.5L775.4 193.1L763.6 187.8ZM797.4 193.2L794.7 193.2L795.9 176.6ZM809.7 193.9L808.3 196.2L773.3 174.7ZM830.0 202.4L827.6 203.6L815.7 174.3ZM835.2 194.6L833.1 192.8L851.6 173.5ZM854.5 188.0L856.6 189.7L845.5 200.8ZM865.4 196.2L867.7 197.7L846.7 227.7ZM877.3 192.0L878.8 194.3L852.5 209.4ZM889.1 203.3L887.3 201.3L918.7 174.5ZM903.4 192.9L905.6 194.4L886.3 220.7ZM921.0 196.5L922.3 198.8L881.8 220.6ZM935.1 193.6L935.3 196.3L893.4 198.4ZM955.9 187.7L958.4 188.6L943.5 224.1ZM962.0 196.0L960.8 193.5L999.8 176.9ZM977.4 199.3L976.2 196.9L994.6 189.6ZM1002.6 205.7L999.9 206.1L995.8 169.6ZM444.1 211.9L442.8 214.3L426.8 203.7ZM457.8 212.4L458.0 215.1L421.6 217.1ZM468.6 217.3L466.0 217.8L464.5 202.6ZM483.6 208.6L484.9 206.3L498.6 215.5ZM493.4 209.5L495.7 210.8L485.2 227.1ZM513.7 212.0L511.8 210.1L527.4 196.3ZM526.4 213.0L524.2 211.4L545.9 183.6ZM542.7 207.9L540.0 207.9L541.6 183.1ZM554.7 216.8L556.6 214.8L564.7 224.5ZM569.6 221.2L568.0 219.1L591.2 203.9ZM582.8 204.4L583.8 201.9L614.0 215.0ZM594.6 213.7L597.3 213.4L598.9 242.0ZM619.1 205.5L620.7 207.7L591.9 225.8ZM633.7 208.8L631.1 209.7L622.7 184.2ZM640.1 205.8L640.7 208.5L608.5 214.2ZM655.2 213.9L653.1 215.7L626.1 182.6ZM666.6 211.5L665.9 208.9L683.9 205.8ZM673.7 215.8L676.4 216.0L673.3 233.3ZM695.5 204.9L697.7 206.6L670.5 239.5ZM704.6 201.8L707.2 201.2L715.8 246.6ZM723.7 214.1L721.0 213.7L730.1 168.9ZM737.4 213.6L740.1 213.9L736.5 238.3ZM752.7 205.5L755.3 205.9L751.1 224.2ZM764.3 218.5L761.7 217.8L767.5 202.7ZM778.0 218.2L775.9 216.5L797.4 192.5ZM799.1 211.9L796.5 211.4L806.0 170.9ZM804.6 208.1L805.2 205.5L838.8 214.0ZM830.5 203.3L830.1 205.9L784.9 198.8ZM828.3 206.3L829.3 203.8L854.7 214.9ZM848.4 217.5L849.5 215.0L866.5 224.1ZM871.7 201.6L874.4 201.7L871.5 227.8ZM877.3 209.3L875.7 211.4L849.2 189.8ZM898.6 213.6L896.8 215.7L887.7 205.9ZM909.7 210.4L912.4 209.8L916.5 236.7ZM918.9 215.0L921.5 215.5L917.0 232.8ZM941.0 219.1L938.8 217.5L961.7 189.2ZM954.5 211.0L953.6 213.5L922.6 200.9ZM973.9 209.4L971.2 209.1L974.0 196.7ZM974.9 215.1L977.6 215.1L976.0 245.5ZM1004.4 212.2L1004.6 214.9L967.4 216.2ZM444.0 232.1L446.5 231.0L452.4 247.0ZM451.3 225.5L448.6 225.2L453.7 183.5ZM462.9 216.2L465.4 217.4L447.7 249.7ZM489.7 228.5L487.6 230.2L459.7 194.8ZM503.8 224.3L501.1 225.0L493.3 185.8ZM513.4 223.6L515.7 222.1L530.7 247.0ZM522.9 228.7L520.3 227.8L533.2 194.7ZM539.5 228.5L541.6 226.8L549.4 238.7ZM555.1 234.2L553.0 235.8L530.0 202.4ZM565.4 232.2L565.3 229.5L603.0 229.9ZM588.4 237.6L585.7 237.8L584.6 196.5ZM588.7 221.7L587.4 219.3L606.3 211.0ZM609.2 221.1L607.2 222.9L599.5 212.2ZM630.2 227.9L627.5 228.0L627.1 183.2ZM645.3 227.4L643.4 229.3L614.1 198.2ZM651.5 223.9L651.6 221.2L695.1 224.7ZM672.5 219.7L671.6 222.3L640.5 210.5ZM677.0 230.7L679.7 230.5L679.4 247.7ZM691.1 227.5L689.3 225.4L716.9 202.7ZM700.7 223.7L702.3 221.6L731.4 245.2ZM731.3 219.1L731.3 221.8L710.5 220.4ZM733.3 231.9L732.9 229.2L754.9 227.3ZM749.6 223.6L750.6 221.1L781.3 235.2ZM763.3 231.0L760.6 231.1L761.7 213.9ZM783.7 224.5L781.0 224.2L784.2 202.1ZM800.5 228.4L799.2 230.8L782.2 220.6ZM815.4 227.4L812.7 227.0L817.8 198.4ZM824.1 225.6L826.4 227.1L803.9 259.6ZM840.1 234.0L837.6 234.9L823.9 190.9ZM848.1 225.7L848.0 223.0L878.6 223.3ZM864.1 224.9L866.8 224.9L865.4 271.3ZM884.3 224.4L886.9 225.1L874.9 264.5ZM900.5 232.8L899.1 230.5L912.8 223.7ZM914.1 230.4L914.5 233.1L899.6 234.0ZM919.5 223.0L920.0 220.4L964.5 231.0ZM944.0 232.1L941.3 232.1L942.3 196.0ZM951.0 217.6L953.6 218.2L945.0 247.2ZM964.9 222.7L966.8 220.8L982.8 239.2ZM974.3 230.6L977.0 230.1L980.4 256.1ZM998.6 221.3L998.7 224.0L966.8 223.7ZM434.7 247.3L434.1 249.9L417.6 244.5ZM462.0 239.2L459.3 239.6L456.5 210.4ZM466.5 238.1L466.8 240.7L441.5 242.4ZM481.1 237.6L482.2 240.0L447.8 253.2ZM492.3 236.6L489.9 235.3L498.4 223.4ZM510.6 243.9L510.2 241.2L529.0 239.6ZM527.3 233.5L529.7 232.2L545.3 264.1ZM536.1 243.7L533.7 244.9L527.4 229.6ZM556.3 241.9L555.8 239.3L568.2 238.1ZM560.1 240.6L562.8 240.7L560.3 267.1ZM585.4 239.9L586.3 237.3L602.1 244.0ZM597.9 248.6L595.2 248.4L597.9 219.6ZM604.8 234.3L607.4 233.8L609.3 253.0ZM626.7 238.8L628.5 236.8L653.6 261.2ZM633.6 236.4L633.3 233.7L679.1 229.2ZM652.6 244.2L653.3 246.8L618.2 255.6ZM670.4 243.1L671.4 245.6L654.8 250.7ZM688.9 237.9L689.9 240.5L652.6 253.2ZM700.0 245.5L701.8 247.6L674.4 269.1ZM702.7 233.4L705.4 233.5L703.4 255.5ZM721.4 239.7L720.3 237.3L746.1 227.8ZM736.9 251.7L734.3 251.0L746.8 213.2ZM758.9 240.2L761.4 241.1L744.2 284.5ZM761.6 245.1L762.9 247.5L741.1 258.0ZM779.2 244.0L777.1 242.3L804.4 211.6ZM799.8 235.7L800.8 238.2L786.6 242.4ZM813.6 232.5L815.3 234.6L800.6 244.2ZM828.6 243.2L831.3 243.9L819.3 285.6ZM832.2 241.9L834.9 241.9L833.4 269.9ZM851.6 236.6L854.2 235.7L863.6 267.5ZM870.5 246.4L873.0 247.6L862.4 266.1ZM872.5 238.1L873.0 235.4L893.5 240.1ZM900.8 236.7L898.6 238.3L886.0 219.5ZM907.6 238.9L908.6 241.4L882.2 251.1ZM917.9 244.3L916.4 242.1L927.2 236.1ZM931.6 240.3L934.0 241.4L924.0 260.0ZM956.7 241.4L955.4 239.1L986.1 223.9ZM956.3 237.8L957.5 235.4L984.8 250.9ZM984.9 235.9L985.4 233.2L998.0 236.8ZM988.0 238.6L987.5 236.0L1026.8 229.4ZM445.0 261.7L442.5 260.5L460.0 227.2ZM449.8 255.7L452.4 256.3L444.1 283.8ZM469.1 249.1L471.5 247.9L489.7 286.5ZM481.0 249.0L483.5 250.2L473.1 269.7ZM499.9 258.7L498.6 256.3L524.6 243.6ZM520.9 263.2L519.8 265.6L483.6 247.8ZM523.5 250.5L521.9 252.7L511.6 243.1ZM539.3 262.9L536.6 262.6L542.8 218.7ZM552.3 260.6L552.4 263.3L517.9 262.7ZM565.9 260.1L568.5 261.0L563.4 272.2ZM588.0 260.3L585.3 260.8L583.2 244.4ZM593.1 261.9L590.4 262.0L591.1 226.2ZM608.7 257.4L610.9 255.8L626.7 279.2ZM625.9 259.1L625.6 261.8L588.0 256.3ZM641.6 264.5L639.5 262.8L649.1 252.8ZM652.1 254.0L653.7 251.8L676.5 270.2ZM669.7 260.8L671.3 258.7L685.7 271.7ZM682.2 264.0L683.4 261.6L696.3 269.9ZM698.9 260.5L696.4 259.5L704.9 242.3ZM710.8 258.2L712.7 260.2L692.2 277.0ZM719.4 258.8L720.3 261.4L695.7 268.6ZM740.0 264.5L738.0 262.7L755.2 245.5ZM753.2 259.0L750.9 257.5L773.5 223.8ZM772.5 260.2L772.3 262.9L739.9 259.5ZM775.8 256.2L778.4 256.8L769.4 287.8ZM791.8 256.3L790.0 258.3L765.0 234.2ZM813.7 255.0L811.4 256.5L792.3 226.2ZM822.2 252.8L824.4 251.3L841.8 278.2ZM832.0 260.2L834.2 261.8L819.7 278.7ZM849.0 254.7L847.2 252.7L883.4 222.3ZM869.5 259.7L868.5 257.2L891.3 249.8ZM883.8 248.3L885.0 250.7L844.0 270.2ZM901.2 256.7L900.5 259.3L866.9 250.2ZM912.6 254.5L912.4 257.2L896.9 254.8ZM921.1 257.2L923.8 256.7L926.1 278.6ZM939.6 247.6L942.1 246.7L954.8 286.2ZM945.2 256.1L943.7 253.8L967.2 240.6ZM968.8 261.6L969.1 258.9L988.7 262.7ZM989.5 250.1L991.0 252.3L952.7 277.1ZM992.5 265.5L990.3 267.1L970.5 238.7ZM432.1 276.4L429.7 275.2L442.3 252.3ZM444.3 265.9L445.5 263.5L468.7 277.3ZM473.6 262.3L475.1 264.5L452.4 278.2ZM482.6 271.0L482.0 273.6L463.4 268.1ZM502.0 267.2L504.2 268.8L475.2 305.4ZM510.3 268.4L509.8 265.8L542.3 260.8ZM519.9 267.9L521.0 265.5L539.4 275.3ZM532.6 270.8L532.4 268.1L565.8 266.9ZM549.5 267.7L550.7 270.2L536.4 275.1ZM565.3 274.2L563.9 272.0L587.9 258.3ZM581.6 271.9L584.0 270.7L597.6 300.2ZM590.2 267.1L590.6 264.4L637.7 272.9ZM604.3 275.3L606.3 277.1L595.3 287.3ZM633.7 270.4L635.2 272.6L599.7 295.3ZM643.7 273.7L641.0 274.3L634.6 236.2ZM645.7 277.8L644.3 275.4L676.8 258.2ZM671.9 282.0L669.3 281.2L678.9 253.9ZM684.2 275.7L682.2 277.5L673.4 265.8ZM689.8 270.5L687.3 269.3L696.8 251.7ZM704.8 275.7L706.8 273.8L721.0 290.7ZM722.1 267.0L719.4 267.1L719.7 243.5ZM732.6 268.5L733.7 266.1L772.0 284.3ZM749.2 270.4L746.5 270.9L743.4 246.6ZM769.6 268.6L768.7 271.1L747.4 261.2ZM777.4 265.2L777.6 262.5L807.6 266.7ZM800.2 282.3L797.6 281.5L809.0 252.7ZM813.6 278.6L811.0 279.0L806.2 231.5ZM822.6 272.9L820.0 272.4L824.9 253.2ZM827.8 278.4L828.1 275.7L871.9 281.5ZM859.6 268.8L856.9 268.7L858.9 246.3ZM861.2 282.4L859.5 280.3L890.3 255.6ZM884.8 279.6L883.7 282.0L841.5 260.6ZM898.3 269.1L895.7 268.3L909.6 228.5ZM910.3 273.6L910.9 271.0L952.6 282.4ZM920.7 265.4L923.3 264.7L927.0 283.7ZM941.9 266.9L940.6 264.5L952.3 259.5ZM957.3 266.3L957.0 269.0L938.8 265.9ZM975.1 264.3L975.7 267.0L942.2 272.7ZM979.8 262.5L982.4 263.2L969.7 307.0ZM986.6 267.8L985.1 265.5L1022.7 242.8ZM439.6 288.2L438.8 285.6L464.9 278.9ZM449.8 284.8L449.3 287.4L418.3 280.3ZM472.4 283.3L470.2 281.6L490.0 258.0ZM484.6 282.5L487.2 283.3L479.0 306.0ZM497.1 287.1L495.6 289.3L462.1 264.0ZM510.1 285.3L509.5 287.9L469.2 278.3ZM530.1 290.2L527.7 291.5L516.0 265.8ZM545.3 291.0L544.2 293.5L529.9 285.7ZM550.0 281.3L552.5 280.4L559.4 302.0ZM573.7 281.9L574.8 284.3L551.0 294.1ZM580.4 284.1L581.8 286.5L541.5 308.1ZM596.7 296.8L594.6 295.1L614.4 273.0ZM599.5 280.6L601.3 278.6L628.6 305.8ZM619.3 285.5L621.7 286.6L607.6 312.4ZM640.0 282.1L642.4 280.9L651.8 301.2ZM658.3 285.3L660.9 285.9L655.6 302.4ZM664.0 284.9L662.2 286.9L641.7 267.2ZM688.6 293.7L687.5 296.2L666.0 284.5ZM700.9 284.8L698.2 284.6L702.2 241.0ZM718.0 281.3L716.7 283.7L681.7 262.5ZM720.1 289.7L722.5 288.3L736.9 315.8ZM740.3 288.6L741.7 290.9L722.9 300.9ZM756.6 277.7L758.6 279.5L738.1 299.9ZM774.9 285.5L773.8 288.0L740.7 272.9ZM786.5 291.4L787.1 294.0L755.1 300.2ZM787.2 279.9L789.9 279.9L788.7 299.5ZM814.2 282.5L813.1 285.0L775.9 266.0ZM819.1 281.3L819.2 284.0L805.5 282.9ZM835.8 283.9L837.4 286.1L800.7 311.3ZM853.7 287.5L855.9 289.0L840.3 309.3ZM870.5 290.5L869.2 288.1L888.0 278.5ZM873.4 289.1L875.3 287.2L884.8 298.5ZM895.0 285.4L897.1 287.2L871.1 316.4ZM912.3 282.7L911.7 285.3L879.1 276.8ZM915.2 284.5L917.5 283.1L939.3 324.6ZM936.1 282.9L936.8 280.3L955.4 286.8ZM952.6 290.1L950.3 291.5L932.0 258.6ZM968.1 287.9L967.2 290.5L946.3 281.7ZM978.5 286.1L976.0 287.1L971.0 270.9ZM994.1 276.6L996.6 275.5L1010.0 309.0ZM445.6 306.9L443.1 308.0L435.8 288.1ZM457.2 306.6L455.7 304.3L495.1 281.0ZM460.2 308.0L461.5 305.7L491.3 323.9ZM480.8 295.0L479.6 297.5L462.4 287.9ZM499.0 299.5L501.7 299.9L498.8 312.0ZM513.5 306.4L511.0 305.5L521.0 281.7ZM527.7 297.5L526.4 295.1L561.6 277.0ZM529.2 307.9L530.6 305.6L562.9 327.6ZM549.8 306.5L547.5 305.1L557.1 291.9ZM566.4 305.8L566.8 308.5L549.3 309.7ZM572.9 295.4L574.6 293.2L593.3 309.6ZM597.0 300.5L598.6 298.3L617.9 313.7ZM613.2 302.7L611.2 304.4L589.2 275.2ZM623.8 302.6L624.3 300.0L663.0 308.7ZM646.2 302.0L647.2 304.5L606.1 320.1ZM651.0 306.1L649.4 308.3L619.6 286.1ZM658.9 309.5L659.4 306.8L677.2 311.6ZM679.4 301.2L681.8 300.0L690.4 320.7ZM702.6 297.0L703.5 299.6L688.0 303.7ZM712.3 306.5L709.6 306.6L709.8 286.2ZM718.6 305.8L718.1 303.2L757.5 297.8ZM734.6 291.6L737.0 292.9L721.2 319.6ZM748.1 304.1L750.8 304.3L748.8 320.6ZM766.4 303.5L769.0 302.7L774.4 326.2ZM779.5 295.1L777.0 296.2L772.6 283.1ZM798.6 302.3L798.0 305.0L785.0 301.1ZM804.2 300.3L804.4 303.0L791.8 302.4ZM817.4 301.6L819.8 302.8L801.6 336.0ZM833.1 300.2L831.5 298.0L847.6 287.7ZM852.9 303.4L850.3 304.1L846.0 280.9ZM870.5 297.9L868.1 299.1L863.9 286.9ZM872.5 293.7L874.1 291.5L904.5 315.9ZM893.0 307.4L892.6 304.7L911.2 303.1ZM912.5 306.7L915.0 307.7L908.4 321.0ZM925.6 304.6L923.1 305.7L912.0 275.0ZM935.5 293.3L937.7 294.7L921.1 318.4ZM946.5 301.3L944.7 299.3L965.9 282.2ZM961.8 300.7L964.0 302.4L944.2 325.7ZM980.7 298.8L978.0 299.1L976.7 266.6ZM1004.9 294.2L1003.6 296.5L980.1 282.6ZM436.7 317.3L439.4 317.1L439.3 343.6ZM448.9 315.7L449.9 318.2L436.9 322.2ZM465.6 313.9L465.0 316.6L450.2 312.2ZM483.1 319.3L485.5 320.7L477.1 332.5ZM493.0 319.5L492.5 322.1L476.2 317.4ZM508.5 324.3L506.0 325.4L491.4 291.4ZM518.2 321.4L520.9 321.4L519.0 346.1ZM538.2 324.6L536.3 326.4L515.6 302.0ZM554.4 317.9L555.0 320.5L526.6 324.8ZM557.8 320.8L558.9 318.3L599.2 337.6ZM585.4 315.9L587.7 314.5L596.8 332.1ZM592.8 315.0L594.8 316.8L563.0 351.9ZM611.0 317.3L608.6 318.5L590.4 278.8ZM621.8 308.2L624.1 306.9L641.0 340.7ZM646.6 324.4L645.4 326.8L610.0 307.8ZM655.9 319.5L653.4 318.6L661.6 301.0ZM664.8 309.6L666.5 311.6L631.0 341.1ZM684.9 322.8L683.2 320.7L704.0 305.5ZM700.3 320.8L702.8 319.7L711.7 343.8ZM705.3 314.1L704.2 311.7L728.8 302.9ZM726.3 318.2L727.3 315.7L752.5 327.1ZM741.5 311.9L744.1 312.7L738.7 327.1ZM747.7 324.0L748.1 321.3L791.5 327.8ZM765.5 317.0L763.8 314.8L801.1 288.9ZM790.3 312.9L791.6 315.3L760.1 332.5ZM801.1 311.3L803.4 312.6L789.1 335.2ZM805.2 319.5L805.9 322.1L777.8 328.4ZM827.7 323.1L825.1 323.8L819.8 300.4ZM839.5 313.5L839.0 316.1L798.9 306.6ZM844.7 321.5L842.5 320.0L861.5 294.0ZM868.5 315.1L868.2 317.8L833.9 313.3ZM877.3 320.3L876.5 322.9L856.1 314.6ZM902.0 317.4L899.4 317.0L904.2 294.8ZM909.1 309.3L911.7 309.7L906.9 333.1ZM920.5 318.4L921.3 320.9L897.6 327.1ZM941.6 310.0L942.6 312.5L912.1 323.6ZM955.3 319.6L952.6 319.7L952.1 276.5ZM968.8 319.7L968.2 317.1L1013.2 308.5ZM985.9 312.6L983.8 314.3L965.1 289.3ZM995.4 314.5L995.3 311.8L1019.8 312.1ZM449.7 326.3L450.1 329.0L413.7 332.7ZM453.2 332.7L450.9 334.1L431.4 300.2ZM471.7 334.1L471.1 331.5L493.0 327.7ZM479.3 334.5L480.6 332.2L514.9 353.5ZM498.0 335.4L496.8 333.0L530.4 317.0ZM512.3 335.2L512.0 337.9L475.8 332.2ZM532.2 338.8L529.5 338.3L538.0 297.8ZM531.4 324.4L532.7 322.0L557.6 336.4ZM558.4 332.9L557.1 330.5L577.8 321.3ZM560.8 334.7L558.5 333.2L585.8 295.1ZM582.8 332.7L580.2 332.0L587.9 305.8ZM588.9 334.5L590.3 332.2L624.2 353.3ZM617.7 327.1L615.0 326.5L618.9 314.2ZM617.6 329.7L617.6 327.0L631.5 328.3ZM634.7 327.0L637.1 325.8L656.8 368.7ZM653.1 337.2L652.4 339.8L616.4 328.5ZM670.3 338.7L667.7 337.7L684.9 297.5ZM677.4 323.6L678.2 326.2L662.6 329.4ZM698.8 336.9L698.6 339.6L680.7 336.6ZM705.9 336.0L703.2 336.1L702.9 295.1ZM726.5 334.1L724.6 332.2L747.8 311.0ZM742.4 322.6L742.6 325.3L727.4 324.8ZM750.5 328.0L749.2 330.4L736.6 322.6ZM767.6 325.6L770.3 325.1L778.3 370.8ZM780.4 327.9L782.2 326.0L802.5 347.6ZM798.6 329.7L801.1 330.7L793.9 345.1ZM802.0 332.6L804.3 331.1L828.6 371.7ZM824.8 327.9L827.3 326.9L836.8 354.0ZM843.2 324.4L845.9 324.3L845.1 339.1ZM858.2 337.8L857.2 340.3L836.4 331.1ZM871.1 334.7L870.4 332.1L895.4 327.1ZM874.8 322.2L877.5 322.4L873.2 349.7ZM898.1 326.5L900.8 326.8L894.1 370.7ZM910.2 336.9L907.7 335.7L924.3 303.6ZM917.9 337.5L920.1 336.1L928.4 351.9ZM938.2 329.2L940.8 328.9L944.4 366.0ZM942.7 333.8L941.8 331.3L984.1 318.1ZM970.1 336.9L967.8 338.3L958.3 320.2ZM990.3 334.7L988.8 336.9L951.4 309.6ZM997.9 326.2L999.2 328.6L970.3 342.4ZM446.0 348.8L447.6 350.9L423.1 367.6ZM447.6 350.8L445.1 350.0L452.5 332.3ZM468.7 345.1L466.4 343.6L487.8 311.9ZM485.3 341.1L487.7 339.8L502.1 369.0ZM488.1 350.1L490.6 349.3L494.1 365.8ZM502.4 350.0L503.2 347.4L528.7 357.0ZM517.8 351.3L518.7 348.8L536.3 356.4ZM538.3 344.6L540.1 342.6L574.9 375.1ZM552.8 348.2L550.1 348.3L549.9 318.6ZM570.6 343.9L573.3 343.9L572.8 375.2ZM589.6 344.8L587.6 346.6L567.0 320.9ZM596.8 341.0L599.4 340.6L603.4 376.4ZM611.4 343.9L613.4 342.1L639.2 374.0ZM620.7 347.9L622.3 345.8L653.9 370.8ZM635.4 351.1L638.1 351.1L637.0 363.3ZM652.4 353.8L649.8 354.3L643.1 312.3ZM660.6 348.2L661.8 345.8L679.2 355.9ZM673.1 351.6L671.4 349.4L698.9 329.9ZM697.4 349.1L699.8 350.4L683.2 377.9ZM716.0 342.9L713.4 343.7L710.4 329.2ZM723.5 339.7L724.6 342.2L706.4 348.9ZM734.2 342.2L735.9 344.3L705.4 367.6ZM742.5 349.0L743.2 346.4L771.2 355.8ZM762.8 351.1L763.1 353.8L733.9 354.7ZM774.0 347.8L776.7 348.1L772.4 376.7ZM798.7 348.9L800.5 351.0L788.9 359.2ZM812.9 343.2L813.6 340.6L846.4 350.9ZM825.3 340.6L826.1 338.0L860.6 349.6ZM838.2 338.8L840.9 339.1L835.8 378.4ZM847.1 338.7L849.2 340.5L822.2 369.9ZM865.5 343.4L862.8 343.5L862.6 306.7ZM878.3 350.7L876.4 352.7L859.3 334.0ZM896.3 351.4L893.7 350.6L907.5 306.5ZM908.3 336.9L910.3 338.7L887.2 363.1ZM917.8 337.5L920.5 336.9L929.2 378.5ZM940.3 338.4L942.9 339.2L934.9 359.5ZM946.1 348.1L948.7 348.8L939.5 379.8ZM960.8 340.5L961.4 337.9L997.1 347.6ZM980.2 344.8L982.6 343.6L992.1 366.0ZM999.3 343.0L998.1 345.4L961.3 324.7ZM439.3 366.8L439.2 369.5L392.1 365.9ZM462.1 356.3L459.7 357.4L452.3 338.0ZM472.4 365.1L473.1 367.7L438.5 375.6ZM485.7 354.6L486.9 357.0L466.2 365.9ZM492.9 363.7L495.0 362.1L513.5 388.1ZM510.2 362.6L508.0 361.1L522.5 341.2ZM529.9 353.2L530.9 355.7L515.6 360.4ZM541.9 361.8L544.5 361.2L549.2 386.2ZM545.2 371.1L543.5 369.0L578.8 342.5ZM572.0 355.7L572.7 358.3L537.8 366.8ZM582.3 353.8L581.8 356.4L567.1 352.7ZM596.1 367.9L594.3 369.9L564.4 342.2ZM611.3 360.1L614.0 360.1L613.3 397.6ZM618.8 352.1L621.1 353.5L610.6 367.7ZM637.2 358.7L637.8 356.1L676.5 366.0ZM655.6 367.1L654.8 364.5L693.8 354.6ZM673.7 368.4L671.0 367.8L681.2 328.4ZM678.6 359.4L676.8 361.4L660.2 344.6ZM698.3 354.0L700.3 352.2L715.8 370.2ZM703.3 367.4L703.6 364.8L745.1 370.0ZM727.8 357.1L727.0 354.5L761.6 345.2ZM730.3 365.7L732.2 363.7L750.2 382.3ZM746.3 358.6L748.4 356.9L763.0 378.1ZM772.4 360.2L772.0 362.9L728.5 355.6ZM787.9 359.6L785.2 359.9L782.7 319.3ZM799.0 362.6L797.7 360.2L826.7 346.5ZM811.6 358.5L813.0 360.8L780.9 379.0ZM825.4 365.6L826.0 368.2L812.1 369.6ZM837.1 358.1L837.5 360.8L796.7 366.8ZM853.4 353.1L856.0 354.0L844.6 383.2ZM873.2 365.4L871.1 367.1L858.7 349.9ZM877.7 357.4L878.8 354.9L914.3 371.8ZM898.7 370.9L896.0 371.0L896.9 349.8ZM903.1 357.2L905.4 358.6L887.9 383.7ZM919.0 354.9L920.1 352.5L942.2 364.1ZM937.1 355.4L939.5 354.2L947.0 373.2ZM956.9 364.0L957.1 366.7L943.0 366.5ZM971.8 365.4L974.3 366.3L969.1 377.5ZM981.5 353.7L983.4 355.7L963.2 372.8ZM992.6 365.6L994.3 367.7L981.1 376.9ZM438.5 379.5L441.2 379.2L443.4 409.4ZM451.2 376.7L453.7 377.7L444.4 396.8ZM476.5 384.4L473.9 385.2L464.9 350.7ZM490.8 367.3L491.8 369.9L459.2 381.2ZM493.6 387.0L491.1 388.1L477.0 351.3ZM515.5 380.1L514.1 377.8L536.6 365.8ZM531.6 379.0L529.0 378.5L533.7 357.3ZM543.2 376.4L542.9 379.1L498.0 373.4ZM550.1 381.9L551.9 379.8L566.0 393.5ZM564.8 371.4L563.4 373.7L550.6 364.5ZM583.5 383.9L582.2 381.5L595.2 376.2ZM588.5 376.6L588.8 373.9L624.8 378.6ZM607.6 375.0L609.8 373.4L616.8 386.2ZM631.2 373.6L633.4 375.2L607.5 410.3ZM628.9 374.4L630.1 372.0L665.9 391.2ZM657.6 378.0L655.2 376.9L675.7 335.4ZM664.0 379.6L666.4 381.0L646.0 412.5ZM683.7 373.9L682.1 376.0L673.2 367.8ZM699.3 378.5L697.3 380.3L671.9 349.9ZM714.5 383.8L712.6 381.9L731.2 364.5ZM713.7 378.8L714.4 376.2L758.6 390.4ZM733.7 373.4L734.2 370.7L775.5 380.2ZM758.5 372.7L755.8 372.3L759.3 357.5ZM771.8 377.5L769.7 379.2L760.0 365.2ZM785.0 383.8L782.7 382.3L798.3 360.8ZM794.5 380.6L791.9 381.4L780.7 343.6ZM812.0 380.0L809.8 381.6L790.7 354.3ZM825.4 371.5L828.1 371.3L828.9 393.7ZM842.5 379.7L845.0 380.9L829.0 412.7ZM850.0 383.2L850.2 380.5L884.3 385.1ZM873.8 380.8L875.1 383.2L849.1 396.7ZM884.0 378.8L886.7 378.5L889.2 422.4ZM888.0 370.8L888.5 368.1L902.7 372.5ZM903.4 367.6L906.0 368.3L893.6 413.5ZM925.4 367.6L927.9 366.6L939.6 401.7ZM942.2 372.7L943.4 375.1L908.1 391.4ZM950.3 381.0L950.5 378.3L966.0 380.8ZM966.3 378.8L965.0 381.2L928.0 358.7ZM985.6 379.2L988.0 380.5L979.9 392.2ZM999.0 384.1L999.4 381.4L1011.2 384.6ZM436.6 391.8L434.0 392.5L427.5 364.8ZM453.4 394.7L455.8 393.5L465.0 414.9ZM477.5 390.6L477.6 393.3L445.7 393.4ZM481.2 398.3L479.2 396.5L503.8 372.3ZM496.4 388.8L499.1 388.6L500.4 428.1ZM506.6 384.5L508.9 386.0L491.2 411.4ZM532.2 389.9L530.6 392.1L509.3 374.4ZM539.9 398.7L537.8 400.3L531.3 389.4ZM557.0 393.2L556.4 390.6L572.8 388.2ZM577.0 394.9L575.2 396.9L554.5 375.2ZM591.0 395.6L590.6 398.3L565.6 393.1ZM592.2 389.9L594.6 388.7L602.1 407.8ZM611.7 397.7L610.2 395.4L625.7 386.7ZM624.2 387.5L622.3 389.3L607.2 372.1ZM636.7 389.7L634.1 389.3L642.0 344.4ZM648.1 395.9L645.4 395.3L656.2 353.3ZM666.0 388.8L663.3 388.5L668.4 351.3ZM681.9 401.6L679.3 402.2L673.8 370.1ZM692.6 387.7L692.0 385.1L738.4 374.4ZM708.0 395.6L706.8 398.0L684.4 384.3ZM725.7 383.1L727.9 384.7L712.7 403.3ZM738.5 392.9L739.0 390.2L760.8 395.2ZM751.3 393.8L748.7 393.2L759.6 352.8ZM776.4 396.5L776.6 399.2L744.5 400.2ZM780.7 392.5L781.4 389.9L796.6 395.0ZM799.1 393.0L801.6 394.0L793.2 411.3ZM806.8 396.8L807.7 394.2L840.6 407.6ZM821.1 385.9L822.1 388.5L804.9 393.7ZM845.2 384.0L845.3 386.7L809.2 386.4ZM853.3 390.2L855.2 388.4L882.4 419.2ZM870.6 387.4L869.2 385.0L899.5 368.7ZM879.4 387.7L881.7 386.3L898.0 415.6ZM904.4 384.3L903.4 386.8L871.0 373.7ZM915.5 382.1L917.5 383.9L905.2 395.1ZM918.6 395.9L921.1 394.8L930.5 417.9ZM941.7 397.2L940.4 394.9L955.3 387.9ZM949.6 385.9L949.7 388.6L913.2 388.4ZM958.8 389.1L961.4 388.6L968.2 434.8ZM981.1 389.4L978.8 388.0L994.7 362.8ZM998.0 394.6L996.2 392.6L1013.7 379.0ZM446.1 397.1L448.0 399.0L434.4 410.4ZM459.6 396.4L462.3 397.1L454.7 422.0ZM462.5 416.1L459.8 415.7L465.3 384.8ZM478.0 400.3L480.3 398.9L492.8 422.5ZM496.2 407.6L498.9 407.4L499.4 450.5ZM511.1 402.5L511.7 399.8L524.0 403.7ZM527.4 402.5L528.5 400.0L560.7 415.6ZM539.1 416.2L536.8 417.6L515.3 379.3ZM557.6 408.0L558.2 410.6L531.4 415.9ZM566.7 401.2L567.8 398.7L608.3 417.9ZM582.2 403.9L583.9 406.1L552.4 428.8ZM600.8 404.3L598.2 403.9L602.8 380.9ZM610.7 409.2L608.5 407.7L624.9 386.2ZM633.3 413.8L632.1 416.2L595.8 396.2ZM648.0 399.8L648.8 402.4L606.0 414.5ZM659.5 412.2L657.8 414.3L638.1 397.9ZM673.6 404.0L672.3 406.3L655.9 395.5ZM677.9 405.7L679.7 403.7L690.6 415.0ZM698.6 412.4L700.9 410.9L713.0 433.1ZM707.7 400.6L708.8 398.1L749.0 417.5ZM724.5 412.4L724.1 415.1L691.4 409.5ZM738.0 403.0L740.7 403.3L735.4 437.5ZM750.9 409.6L753.5 410.2L747.6 428.3ZM770.2 403.2L772.8 402.9L776.7 442.7ZM780.5 410.9L778.2 412.4L766.8 393.0ZM792.5 406.8L793.0 404.1L839.2 414.2ZM804.4 408.3L802.6 406.3L830.5 382.1ZM815.1 409.4L815.5 406.8L853.9 413.4ZM842.4 408.7L841.3 411.2L819.3 399.7ZM856.0 407.2L853.3 407.2L854.5 394.0ZM866.8 400.2L866.6 402.9L832.4 399.1ZM876.8 411.4L878.7 413.2L869.2 421.4ZM896.0 401.8L896.2 399.1L918.4 402.5ZM908.6 400.5L910.9 401.8L901.6 415.8ZM921.6 407.4L924.1 408.4L910.5 438.4ZM933.1 399.1L935.5 400.2L928.8 411.7ZM952.9 407.4L954.2 409.8L935.8 418.1ZM962.4 409.0L965.1 408.8L965.1 432.8ZM982.2 404.7L981.1 402.3L998.1 395.7ZM991.6 404.9L990.9 407.5L959.8 398.1ZM436.1 428.9L433.8 427.4L451.5 403.7ZM456.0 425.1L458.4 423.9L464.6 439.9ZM463.3 418.1L460.6 417.6L466.3 392.5ZM475.9 420.5L478.5 421.3L473.2 434.1ZM497.5 430.6L494.9 431.3L483.0 385.4ZM511.3 425.5L513.1 427.5L490.3 446.4ZM525.1 418.3L527.4 416.9L545.0 450.2ZM546.1 417.0L547.5 419.3L526.8 429.8ZM553.9 417.2L556.6 416.8L560.8 461.0ZM560.5 428.6L558.4 426.8L569.6 416.1ZM577.0 423.4L575.6 425.8L560.5 415.5ZM596.9 412.7L598.3 415.0L571.1 429.8ZM612.1 416.5L614.4 415.0L638.4 454.6ZM623.4 416.3L624.4 413.8L647.8 424.5ZM634.2 414.9L636.9 415.2L629.5 459.5ZM653.2 423.0L654.6 420.8L688.1 443.6ZM663.6 427.8L664.5 425.2L680.4 431.9ZM672.8 428.6L672.0 426.1L709.6 416.2ZM691.4 416.5L690.8 413.9L708.8 411.1ZM714.6 418.1L716.9 419.5L701.6 441.5ZM717.2 418.8L715.2 416.9L735.2 396.9ZM744.7 417.2L745.0 419.9L704.5 423.0ZM759.0 417.5L759.6 420.1L713.2 430.3ZM758.1 419.8L760.1 418.0L769.9 430.4ZM777.5 423.3L778.2 425.9L747.2 433.1ZM796.1 417.4L796.9 420.0L756.6 431.1ZM801.2 414.8L803.6 413.5L816.3 439.3ZM819.2 425.9L819.0 423.2L864.0 421.2ZM838.7 419.6L838.1 422.2L798.7 413.1ZM849.8 416.9L850.7 414.4L873.3 423.1ZM870.2 414.7L871.0 417.3L845.9 423.2ZM884.6 426.3L884.2 423.6L914.7 420.3ZM896.9 425.8L898.4 428.0L871.0 444.4ZM901.8 414.2L904.4 414.8L898.3 434.8ZM921.0 426.3L923.6 425.7L925.8 439.3ZM934.6 419.6L935.4 417.0L972.7 429.7ZM958.4 429.3L955.9 428.5L969.2 391.5ZM971.5 419.7L969.6 417.7L997.2 392.7ZM990.8 426.6L990.0 429.1L956.6 416.4ZM988.6 417.7L990.8 416.1L1005.3 438.3ZM443.3 436.4L441.5 434.4L456.4 422.5ZM459.1 434.7L457.1 436.4L431.8 405.1ZM469.7 438.4L471.8 436.7L493.7 466.1ZM476.1 435.3L478.2 433.6L494.8 456.1ZM502.8 431.9L501.4 434.2L464.9 409.8ZM508.7 431.5L511.3 430.8L517.7 458.8ZM524.7 443.0L522.0 443.2L521.1 406.1ZM544.2 442.7L541.5 443.1L539.7 422.2ZM550.5 434.4L551.8 432.1L581.8 449.4ZM564.0 438.3L563.4 440.9L549.5 436.2ZM579.1 432.7L581.8 432.6L580.7 478.2ZM604.2 433.0L601.5 433.5L597.3 406.4ZM618.4 441.7L618.4 444.4L583.5 442.9ZM620.2 440.5L620.0 437.8L644.0 437.7ZM628.1 444.3L628.5 441.6L664.5 449.2ZM653.1 437.0L652.0 434.5L667.3 428.8ZM661.2 442.7L661.3 440.0L682.7 442.3ZM678.4 439.8L675.7 440.0L673.1 393.8ZM693.6 433.6L690.9 433.7L690.0 389.0ZM706.4 438.9L704.9 441.1L679.0 422.2ZM725.2 435.5L723.5 433.4L740.1 422.1ZM744.6 446.2L742.3 444.9L756.1 422.9ZM761.9 430.7L762.1 433.4L731.9 433.7ZM759.3 441.7L761.7 440.6L772.8 467.7ZM774.6 437.1L772.3 435.8L791.1 404.5ZM790.5 436.2L792.9 435.0L808.9 467.0ZM814.6 426.8L817.1 427.6L809.3 447.4ZM820.5 445.4L818.0 446.4L806.5 414.2ZM838.8 436.9L841.5 437.5L835.9 456.0ZM843.8 427.9L846.3 427.0L858.0 466.1ZM865.7 439.4L863.1 439.6L861.3 392.7ZM876.2 435.7L877.5 438.1L860.7 446.1ZM891.9 437.4L894.6 437.7L889.5 469.5ZM907.0 433.5L905.0 431.7L933.4 399.4ZM931.1 432.7L932.3 435.2L899.0 449.5ZM944.4 433.3L947.0 434.1L937.0 461.5ZM950.6 440.9L949.6 438.4L980.6 427.6ZM974.8 433.5L975.6 436.1L932.5 447.8ZM979.5 432.7L978.7 435.3L963.8 429.4ZM994.1 439.5L992.1 441.3L963.1 403.9ZM436.5 448.2L434.0 449.2L418.5 407.8ZM450.3 451.1L447.8 452.2L434.3 419.8ZM471.2 455.9L470.3 453.4L492.1 447.4ZM487.5 449.4L489.2 451.5L458.6 474.0ZM502.9 455.0L500.3 455.6L495.9 429.1ZM518.8 451.2L516.9 453.1L494.0 428.7ZM527.1 460.6L524.5 461.3L516.2 429.1ZM541.9 451.9L544.2 453.2L531.7 473.0ZM554.5 450.3L552.0 449.3L568.0 412.9ZM565.7 450.9L565.4 448.2L603.9 444.3ZM589.3 454.3L588.4 456.9L568.1 447.6ZM593.7 456.7L591.9 458.6L578.0 443.5ZM609.6 453.4L607.6 455.2L582.5 424.7ZM626.0 448.7L623.6 449.8L617.5 434.3ZM635.6 448.8L634.6 451.3L623.4 445.2ZM649.3 452.0L650.8 454.3L626.2 468.0ZM662.6 448.9L662.0 446.3L706.5 437.7ZM686.1 448.7L683.6 449.7L669.1 411.2ZM695.1 449.5L692.5 449.9L688.7 415.2ZM707.6 450.3L706.4 447.9L720.6 442.5ZM723.9 451.2L722.5 453.5L705.3 441.0ZM741.5 444.7L740.9 447.3L726.4 443.0ZM749.2 453.4L751.8 452.6L755.9 469.6ZM770.5 450.7L771.4 448.2L796.5 459.1ZM775.9 460.0L774.1 458.0L803.6 431.8ZM794.1 452.6L795.0 450.0L827.7 463.9ZM810.5 447.8L809.4 450.3L790.9 440.8ZM832.2 454.6L829.5 454.6L830.7 438.6ZM829.0 444.2L831.5 443.1L843.0 472.8ZM851.4 456.9L852.9 454.6L876.8 472.6ZM866.9 450.8L868.1 448.4L881.4 456.3ZM870.3 445.6L872.6 444.2L896.0 484.0ZM899.7 447.4L897.4 448.8L883.2 422.1ZM914.7 443.6L916.9 445.2L898.9 468.7ZM924.1 448.3L921.8 447.0L931.5 432.2ZM939.1 450.4L940.1 452.9L917.1 460.8ZM958.1 454.9L955.7 456.0L940.9 419.4ZM975.7 448.0L977.0 450.3L937.2 471.5ZM984.7 453.2L987.3 452.4L998.8 495.6ZM994.8 451.4L996.7 449.6L1007.9 463.6ZM446.8 461.6L447.3 464.2L420.0 467.3ZM451.3 460.8L453.9 461.3L444.2 504.6ZM465.6 459.7L468.2 459.1L476.4 499.2ZM488.7 471.6L487.2 473.8L468.2 459.2ZM489.4 464.6L490.9 462.3L508.7 475.1ZM506.2 460.2L508.4 458.6L516.7 472.7ZM521.9 474.6L521.2 472.0L536.7 469.3ZM543.1 461.4L540.8 462.7L524.7 432.2ZM554.3 461.6L554.9 464.2L541.5 465.8ZM564.8 469.4L566.2 467.1L606.7 492.8ZM574.5 474.4L574.1 471.8L601.3 469.5ZM599.9 463.6L602.6 464.0L596.1 500.2ZM609.2 463.3L606.5 463.0L610.4 444.5ZM631.2 457.7L633.6 458.9L614.3 495.0ZM647.8 466.9L646.1 469.0L611.4 438.8ZM646.2 461.8L647.8 459.7L676.1 483.3ZM671.6 462.8L668.9 463.3L666.0 441.1ZM685.0 467.9L683.6 470.2L656.7 453.1ZM691.8 465.6L694.4 465.0L703.8 507.3ZM711.3 471.3L709.6 473.4L688.5 454.6ZM725.9 464.1L727.2 466.5L698.5 481.1ZM737.0 467.7L739.7 467.8L735.5 506.7ZM751.9 473.7L749.5 472.4L757.6 460.1ZM775.1 472.0L772.9 473.5L763.5 457.1ZM784.1 464.5L786.8 464.2L789.5 499.2ZM787.9 467.8L790.4 466.9L797.2 488.9ZM806.5 465.8L804.8 467.9L777.7 444.7ZM819.9 462.9L821.4 460.7L841.1 475.8ZM841.5 474.9L840.2 472.5L854.0 466.5ZM848.8 463.8L847.9 466.3L835.5 460.0ZM858.0 472.8L858.0 470.1L885.8 470.8ZM886.1 472.4L883.4 472.1L887.9 445.3ZM900.3 457.2L902.9 457.5L898.0 492.1ZM905.3 475.8L902.8 474.6L921.6 438.8ZM926.8 466.9L929.3 465.8L937.9 488.1ZM934.3 466.8L932.2 468.6L908.9 439.8ZM953.0 465.6L951.8 463.2L980.4 449.8ZM965.1 475.7L962.7 476.9L946.8 444.0ZM986.2 459.0L985.3 461.5L949.8 448.1ZM1000.8 460.3L1001.2 463.0L963.4 467.6Z"/>
</svg>

<!-- dims slider -->
<div class="t" style="left:376.5px;top:641.5px;font-size:11.4px;letter-spacing:0.5px">0</div>
<div class="btn" style="left:393px;top:640px;width:15px;height:15px;background:#414851;border-radius:2px"></div>
<svg class="a" style="left:393px;top:640px" width="15" height="15" viewBox="0 0 15 15"><path d="M3.5 3 L11.5 7.5 L3.5 12Z" fill="#d1d2d4"/><path d="M9.5 14 H14 V9.5" fill="none" stroke="#d1d2d4" stroke-width="1.6"/></svg>
<div class="btn" style="left:412px;top:640px;width:13px;height:15px;background:#414851;border-radius:2px"></div>
<svg class="a" style="left:412px;top:640px" width="13" height="15" viewBox="0 0 13 15"><rect x="3" y="3.5" width="1.6" height="8" fill="#d1d2d4"/><path d="M10.5 3.5 L4.5 7.5 L10.5 11.5Z" fill="#d1d2d4"/></svg>
<div class="a" style="left:428px;top:640px;width:579px;height:15px;background:#414851;border-radius:2px"></div>
<div class="a" style="left:676px;top:641px;width:41px;height:13px;background:#6a7380;border-radius:2px"></div>
<div class="btn" style="left:1010px;top:640px;width:13px;height:15px;background:#414851;border-radius:2px"></div>
<svg class="a" style="left:1010px;top:640px" width="13" height="15" viewBox="0 0 13 15"><rect x="8.4" y="3.5" width="1.6" height="8" fill="#d1d2d4"/><path d="M2.5 3.5 L8.5 7.5 L2.5 11.5Z" fill="#d1d2d4"/></svg>
<div class="t" style="left:1040px;top:641.5px;font-size:11.4px;letter-spacing:0.5px;color:#868e93">6</div>
<div class="a" style="left:1053px;top:641px;width:1px;height:14px;background:#5a626c"></div>
<div class="t" style="left:1060px;top:641.5px;font-size:11.4px;letter-spacing:0.5px;color:#868e93">13</div>

<!-- status -->
<svg class="a" style="left:988px;top:673px" width="9" height="6"><path d="M0.8 5 L4.5 1 L8.2 5Z" fill="#a9adb1"/></svg>
<div class="t" style="left:1000.4px;top:669.6px;font-size:13.5px;letter-spacing:0.73px">activity</div>
</body></html>
